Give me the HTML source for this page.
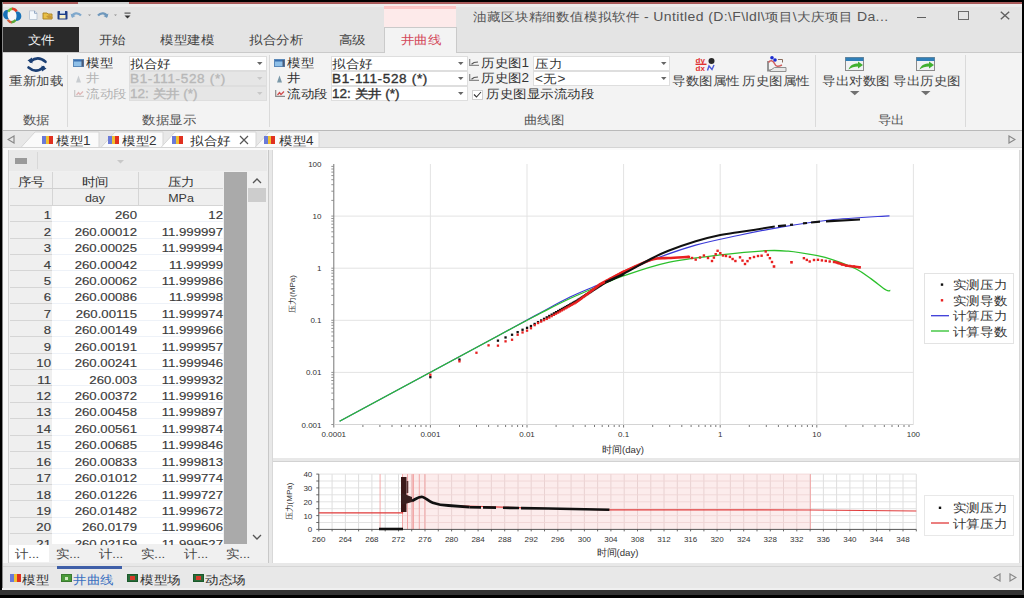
<!DOCTYPE html><html><head><meta charset='utf-8'><style>
*{box-sizing:border-box}
html,body{margin:0;padding:0}
body{width:1024px;height:598px;overflow:hidden;position:relative;background:#000;font-family:"Liberation Sans",sans-serif;color:#222;font-size:12px}
.a{position:absolute}
.t{position:absolute;white-space:nowrap;line-height:1}
</style></head><body><div style='position:absolute;left:0;top:0;width:1024px;height:598px;overflow:hidden'><div class="a" style="left:2px;top:2px;width:1020px;height:587px;background:#e4e4e4"></div>
<div class="a" style="left:2px;top:2px;width:1020px;height:1.5px;background:#a85a5a"></div>
<div class="a" style="left:77.5px;top:1.5px;width:51px;height:2px;background:#cfcfcf"></div>
<div class="a" style="left:2px;top:3.5px;width:1020px;height:3px;background:#ececec"></div>
<div class="a" style="left:384px;top:5px;width:72px;height:22px;background:#fdeaea"></div>
<div class="a" style="left:384px;top:5.5px;width:72px;height:3px;background:#fcc6c6"></div>
<div class="t" style="left:473px;top:2.8000000000000007px;height:28px;line-height:28px;font-size:12.44px;transform:scaleX(1.125);transform-origin:0 50%;color:#555;letter-spacing:0.35px">油藏区块精细数值模拟软件 - Untitled (D:\F\ldl\项目\大庆项目 Da...</div>
<div class="a" style="left:917px;top:16.8px;width:8.5px;height:1.6px;background:#606060"></div>
<div class="a" style="left:958px;top:11px;width:10.5px;height:8.5px;border:1.5px solid #6a6a6a"></div>
<svg class="a" style="left:1000px;top:10.5px" width="10" height="9"><path d="M0.8 0.8L9.2 8.2M9.2 0.8L0.8 8.2" stroke="#606060" stroke-width="1.4"/></svg>
<svg class="a" style="left:0px;top:0px" width="26" height="28" viewBox="0 0 26 28">
<ellipse cx="12.2" cy="15.4" rx="4.5" ry="5.5" fill="#f6f8fa"/>
<path d="M9 9.8 C4.2 9.4 2.6 12.8 3.2 15.8 C3.8 18.8 6.4 19.9 9 19.3 C7.2 17 6.9 12.6 9 9.8Z" fill="#1672b8"/>
<path d="M15 11.3 C19.8 10.8 21.7 13.8 21.3 16.9 C20.9 19.6 18.2 21.2 15 20.9 C17 18.6 17.1 13.8 15 11.3Z" fill="#1672b8"/>
<path d="M8.3 11.8 C9.5 9.6 11 8.8 12.5 8.8" stroke="#6cc040" stroke-width="2.4" fill="none"/>
<path d="M12 8.8 C14 8.8 15.6 9.8 16.6 11.4" stroke="#e0402a" stroke-width="2.6" fill="none"/>
<path d="M7.8 19.8 C9 21.6 10.5 22.2 12 22.2" stroke="#d85a3a" stroke-width="2.4" fill="none"/>
<path d="M11.5 22.2 C13.2 22.1 14.6 21.3 15.6 20" stroke="#58a838" stroke-width="2.4" fill="none"/>
</svg>
<svg class="a" style="left:28px;top:10px" width="104" height="11" viewBox="0 0 104 11">
<path d="M1.5 0.8H6.5L9 3.3V9.5H1.5Z" fill="#f4f8fc" stroke="#b8c4d4" stroke-width="0.9"/>
<path d="M6.5 0.8V3.3H9" fill="none" stroke="#8aa0c0" stroke-width="0.9"/>
<path d="M15 3H19L20 4H24V9H15Z" fill="#e8c048" stroke="#a88020" stroke-width="0.9"/>
<path d="M18 6L22 5L25 8L21 9Z" fill="#c89838"/>
<rect x="29.5" y="1" width="10" height="8.5" rx="0.8" fill="#1f3f88"/>
<rect x="31.5" y="5" width="6" height="3.5" fill="#f8f0c8"/>
<rect x="32" y="1" width="5" height="2.6" fill="#d8e4f4"/>
<path d="M44 6.5 C45 3 50 2 53 5.5" stroke="#7fa8cc" stroke-width="2.2" fill="none"/>
<path d="M42.5 3.5 L44 8 L47.5 6Z" fill="#7fa8cc"/>
<path d="M60 4.5 H63 L61.5 6Z" fill="#909090"/>
<path d="M79 6.5 C78 3 73 2 70 5.5" stroke="#6f98bc" stroke-width="2.2" fill="none"/>
<path d="M80.5 3.5 L79 8 L75.5 6Z" fill="#6f98bc"/>
<path d="M86 4.5 H89 L87.5 6Z" fill="#909090"/>
<rect x="96.5" y="2.5" width="6" height="1.2" fill="#555"/>
<path d="M96.5 5.5 H102.5 L99.5 8.5Z" fill="#333"/>
</svg>
<div class="a" style="left:2px;top:27px;width:77px;height:25px;background:#2b2b2b"></div>
<div class="t" style="left:-59.0px;top:26.799999999999997px;width:200px;height:27.0px;line-height:27.0px;text-align:center;font-size:12.00px;transform:scaleX(1.125);transform-origin:50% 50%;color:#f0f0f0">文件</div>
<div class="t" style="left:12.0px;top:26.799999999999997px;width:200px;height:27.0px;line-height:27.0px;text-align:center;font-size:12.00px;transform:scaleX(1.125);transform-origin:50% 50%;color:#444">开始</div>
<div class="t" style="left:87.0px;top:26.799999999999997px;width:200px;height:27.0px;line-height:27.0px;text-align:center;font-size:12.00px;transform:scaleX(1.125);transform-origin:50% 50%;color:#444">模型建模</div>
<div class="t" style="left:176.0px;top:26.799999999999997px;width:200px;height:27.0px;line-height:27.0px;text-align:center;font-size:12.00px;transform:scaleX(1.125);transform-origin:50% 50%;color:#444">拟合分析</div>
<div class="t" style="left:252.0px;top:26.799999999999997px;width:200px;height:27.0px;line-height:27.0px;text-align:center;font-size:12.00px;transform:scaleX(1.125);transform-origin:50% 50%;color:#444">高级</div>
<div class="a" style="left:384px;top:27px;width:73px;height:26px;background:#f3f3f3;border:1px solid #cacaca;border-bottom:none"></div>
<div class="t" style="left:320.5px;top:27.299999999999997px;width:200px;height:27.0px;line-height:27.0px;text-align:center;font-size:12.00px;transform:scaleX(1.125);transform-origin:50% 50%;color:#d4485a">井曲线</div>
<div class="a" style="left:2px;top:52px;width:1020px;height:79px;background:#f3f3f3;border-top:1px solid #cacaca;border-bottom:1px solid #b9b9b9"></div>
<div class="a" style="left:385px;top:52px;width:71px;height:1.2px;background:#f3f3f3"></div>
<div class="a" style="left:67px;top:55px;width:1px;height:72px;background:#dadada"></div>
<div class="a" style="left:269px;top:55px;width:1px;height:72px;background:#dadada"></div>
<div class="a" style="left:815px;top:55px;width:1px;height:72px;background:#dadada"></div>
<div class="a" style="left:965px;top:55px;width:1px;height:72px;background:#dadada"></div>
<svg class="a" style="left:20px;top:52px" width="34" height="24" viewBox="0 0 34 24">
<path d="M10.5 9.5 Q18 3.2 25.5 9.8" stroke="#1b3f74" stroke-width="2.6" fill="none" stroke-linecap="round"/>
<path d="M7.5 8.5 L12 5.5 L12.5 11.5Z" fill="#1b3f74"/>
<path d="M8.5 15.5 Q16 21.8 23.5 15.2" stroke="#1b3f74" stroke-width="2.6" fill="none" stroke-linecap="round"/>
<path d="M26.5 16.5 L22 19.5 L21.5 13.5Z" fill="#1b3f74"/>
</svg>
<div class="t" style="left:-64.0px;top:68.3px;width:200px;height:27.0px;line-height:27.0px;text-align:center;font-size:12.00px;transform:scaleX(1.125);transform-origin:50% 50%;color:#444">重新加载</div>
<div class="t" style="left:-64.0px;top:107.3px;width:200px;height:27.0px;line-height:27.0px;text-align:center;font-size:12.00px;transform:scaleX(1.125);transform-origin:50% 50%;color:#555">数据</div>
<svg class="a" style="left:73px;top:58.5px" width="11" height="8" viewBox="0 0 11 8"><rect x="0.5" y="0.5" width="10" height="7" fill="#8fc0e8" stroke="#5a88b8" stroke-width="1"/><rect x="1" y="1" width="9" height="1.5" fill="#3a70b0"/><rect x="8.5" y="1" width="2" height="6.5" fill="#4a5a78"/></svg>
<div class="t" style="left:85.5px;top:49.8px;height:27.0px;line-height:27.0px;font-size:12.00px;transform:scaleX(1.125);transform-origin:0 50%;color:#333">模型</div>
<svg class="a" style="left:75px;top:74.5px" width="7" height="8" viewBox="0 0 7 8"><path d="M3.5 0.5 L6 7.5 H1Z" fill="#c8ccd0"/></svg>
<div class="t" style="left:85.5px;top:65.3px;height:27.0px;line-height:27.0px;font-size:12.00px;transform:scaleX(1.125);transform-origin:0 50%;color:#b4b4b4">井</div>
<svg class="a" style="left:73.5px;top:89.5px" width="10" height="7" viewBox="0 0 10 7"><path d="M0.7 0 V6.3 H10" stroke="#c8c8c8" stroke-width="1.2" fill="none"/><path d="M2.5 5 L4.5 2.5 L6 4.5 L9 1.5" stroke="#e0b8b8" stroke-width="1.3" fill="none"/></svg>
<div class="t" style="left:85.5px;top:80.8px;height:27.0px;line-height:27.0px;font-size:12.00px;transform:scaleX(1.125);transform-origin:0 50%;color:#b4b4b4">流动段</div>
<div class="a" style="left:128.5px;top:55.5px;width:138px;height:15px;background:#fff;border:1px solid #dedede"></div>
<div class="t" style="left:130.0px;top:51.3px;height:27.0px;line-height:27.0px;font-size:12.00px;transform:scaleX(1.125);transform-origin:0 50%;color:#333;letter-spacing:0px;">拟合好</div>
<svg class="a" style="left:257.0px;top:62.0px" width="6" height="4"><path d="M0 0H5.5L2.75 3Z" fill="#666"/></svg>
<div class="a" style="left:128.5px;top:70.5px;width:138px;height:15px;background:#e6e6e6;border:1px solid #dedede"></div>
<div class="t" style="left:130.0px;top:65.5px;height:27.0px;line-height:27.0px;font-size:12.00px;transform:scaleX(1.125);transform-origin:0 50%;color:#b8b8b8;letter-spacing:0.6px;-webkit-text-stroke:0.35px #b8b8b8">B1-111-528 (*)</div>
<svg class="a" style="left:257.0px;top:77.0px" width="6" height="4"><path d="M0 0H5.5L2.75 3Z" fill="#c8c8c8"/></svg>
<div class="a" style="left:128.5px;top:85.5px;width:138px;height:15px;background:#e6e6e6;border:1px solid #dedede"></div>
<div class="t" style="left:130.0px;top:80.5px;height:27.0px;line-height:27.0px;font-size:12.00px;transform:scaleX(1.125);transform-origin:0 50%;color:#b8b8b8;letter-spacing:0px;-webkit-text-stroke:0.35px #b8b8b8">12: 关井 (*)</div>
<svg class="a" style="left:257.0px;top:92.0px" width="6" height="4"><path d="M0 0H5.5L2.75 3Z" fill="#c8c8c8"/></svg>
<div class="t" style="left:69.0px;top:107.3px;width:200px;height:27.0px;line-height:27.0px;text-align:center;font-size:12.00px;transform:scaleX(1.125);transform-origin:50% 50%;color:#555">数据显示</div>
<svg class="a" style="left:274px;top:58.5px" width="11" height="8" viewBox="0 0 11 8"><rect x="0.5" y="0.5" width="10" height="7" fill="#8fc0e8" stroke="#5a88b8" stroke-width="1"/><rect x="1" y="1" width="9" height="1.5" fill="#3a70b0"/><rect x="8.5" y="1" width="2" height="6.5" fill="#4a5a78"/></svg>
<div class="t" style="left:286.5px;top:49.8px;height:27.0px;line-height:27.0px;font-size:12.00px;transform:scaleX(1.125);transform-origin:0 50%;color:#333">模型</div>
<svg class="a" style="left:276px;top:74.5px" width="7" height="8" viewBox="0 0 7 8"><path d="M3.5 0.5 L6 7.5 H1Z" fill="#7a98a8"/></svg>
<div class="t" style="left:286.5px;top:65.3px;height:27.0px;line-height:27.0px;font-size:12.00px;transform:scaleX(1.125);transform-origin:0 50%;color:#333">井</div>
<svg class="a" style="left:274.5px;top:89.5px" width="10" height="7" viewBox="0 0 10 7"><path d="M0.7 0 V6.3 H10" stroke="#8a8a8a" stroke-width="1.2" fill="none"/><path d="M2.5 5 L4.5 2.5 L6 4.5 L9 1.5" stroke="#d05050" stroke-width="1.3" fill="none"/></svg>
<div class="t" style="left:286.5px;top:80.8px;height:27.0px;line-height:27.0px;font-size:12.00px;transform:scaleX(1.125);transform-origin:0 50%;color:#333">流动段</div>
<div class="a" style="left:330.5px;top:55.5px;width:137px;height:15px;background:#fff;border:1px solid #dedede"></div>
<div class="t" style="left:332.0px;top:51.3px;height:27.0px;line-height:27.0px;font-size:12.00px;transform:scaleX(1.125);transform-origin:0 50%;color:#333;letter-spacing:0px;">拟合好</div>
<svg class="a" style="left:458.0px;top:62.0px" width="6" height="4"><path d="M0 0H5.5L2.75 3Z" fill="#666"/></svg>
<div class="a" style="left:330.5px;top:70.5px;width:137px;height:15px;background:#fff;border:1px solid #dedede"></div>
<div class="t" style="left:332.0px;top:65.5px;height:27.0px;line-height:27.0px;font-size:12.00px;transform:scaleX(1.125);transform-origin:0 50%;color:#333;letter-spacing:0.6px;-webkit-text-stroke:0.35px #333">B1-111-528 (*)</div>
<svg class="a" style="left:458.0px;top:77.0px" width="6" height="4"><path d="M0 0H5.5L2.75 3Z" fill="#666"/></svg>
<div class="a" style="left:330.5px;top:85.5px;width:137px;height:15px;background:#fff;border:1px solid #dedede"></div>
<div class="t" style="left:332.0px;top:80.5px;height:27.0px;line-height:27.0px;font-size:12.00px;transform:scaleX(1.125);transform-origin:0 50%;color:#333;letter-spacing:0px;-webkit-text-stroke:0.35px #333">12: 关井 (*)</div>
<svg class="a" style="left:458.0px;top:92.0px" width="6" height="4"><path d="M0 0H5.5L2.75 3Z" fill="#666"/></svg>
<svg class="a" style="left:469px;top:58.5px" width="10" height="7" viewBox="0 0 10 7"><path d="M0.7 0 V6.3 H10" stroke="#8a8a8a" stroke-width="1.2" fill="none"/><path d="M2.5 5.2 L5 3.5 L9 3" stroke="#555" stroke-width="1.2" fill="none"/></svg>
<div class="t" style="left:481px;top:49.8px;height:27.0px;line-height:27.0px;font-size:12.00px;transform:scaleX(1.125);transform-origin:0 50%;color:#333">历史图1</div>
<svg class="a" style="left:469px;top:74px" width="10" height="7" viewBox="0 0 10 7"><path d="M0.7 0 V6.3 H10" stroke="#8a8a8a" stroke-width="1.2" fill="none"/><path d="M2.5 5.2 L5 3.5 L9 3" stroke="#555" stroke-width="1.2" fill="none"/></svg>
<div class="t" style="left:481px;top:65.3px;height:27.0px;line-height:27.0px;font-size:12.00px;transform:scaleX(1.125);transform-origin:0 50%;color:#333">历史图2</div>
<div class="a" style="left:533px;top:55.5px;width:137px;height:15px;background:#fff;border:1px solid #dedede"></div>
<div class="t" style="left:534.5px;top:51.3px;height:27.0px;line-height:27.0px;font-size:12.00px;transform:scaleX(1.125);transform-origin:0 50%;color:#333;letter-spacing:0px;">压力</div>
<svg class="a" style="left:660.5px;top:62.0px" width="6" height="4"><path d="M0 0H5.5L2.75 3Z" fill="#666"/></svg>
<div class="a" style="left:533px;top:70.5px;width:137px;height:15px;background:#fff;border:1px solid #dedede"></div>
<div class="t" style="left:534.5px;top:66.3px;height:27.0px;line-height:27.0px;font-size:12.00px;transform:scaleX(1.125);transform-origin:0 50%;color:#333;letter-spacing:0.5px;">&lt;无&gt;</div>
<svg class="a" style="left:660.5px;top:77.0px" width="6" height="4"><path d="M0 0H5.5L2.75 3Z" fill="#666"/></svg>
<div class="a" style="left:471.5px;top:89.5px;width:11px;height:10px;background:#fff;border:1px solid #cfcfcf"></div>
<svg class="a" style="left:473px;top:91px" width="9" height="7"><path d="M1 3.5L3.5 6L8 1" stroke="#333" stroke-width="1.1" fill="none"/></svg>
<div class="t" style="left:486px;top:81.3px;height:27.0px;line-height:27.0px;font-size:12.00px;transform:scaleX(1.125);transform-origin:0 50%;color:#333">历史图显示流动段</div>
<div class="t" style="left:443.5px;top:107.3px;width:200px;height:27.0px;line-height:27.0px;text-align:center;font-size:12.00px;transform:scaleX(1.125);transform-origin:50% 50%;color:#555">曲线图</div>
<div class="t" style="left:606.0px;top:68.3px;width:200px;height:27.0px;line-height:27.0px;text-align:center;font-size:12.00px;transform:scaleX(1.125);transform-origin:50% 50%;color:#444">导数图属性</div>
<div class="t" style="left:676.0px;top:68.3px;width:200px;height:27.0px;line-height:27.0px;text-align:center;font-size:12.00px;transform:scaleX(1.125);transform-origin:50% 50%;color:#444">历史图属性</div>
<svg class="a" style="left:695px;top:56px" width="22" height="16" viewBox="0 0 22 16">
<text x="0.5" y="6.8" font-size="8" fill="#e03030" font-family="Liberation Sans" font-weight="bold">dy</text>
<rect x="0.5" y="7.6" width="11" height="1.4" fill="#e03030"/>
<text x="0.5" y="15.3" font-size="8" fill="#e03030" font-family="Liberation Sans" font-weight="bold">dx</text>
<circle cx="16.5" cy="5" r="3" fill="#2a2a2a"/>
<path d="M12.5 14.5 L14 10 L17 13.5 L19 9" stroke="#4a5ad8" stroke-width="1.4" fill="none"/>
</svg>
<svg class="a" style="left:766px;top:56px" width="22" height="17" viewBox="0 0 22 17">
<path d="M2 5 V14.5 H17" stroke="#8a8a8a" stroke-width="1.8" fill="none"/>
<path d="M2.5 6.5 C4 4 7 4 8.5 7.5 C10 11 12 11 16 9" stroke="#d06060" stroke-width="1.5" fill="none"/>
<path d="M4 14.5 L8.5 11.5 H20 V15.5 H4Z" fill="#e8e8e8" stroke="#909090" stroke-width="1"/>
<circle cx="6" cy="1.8" r="1.8" fill="#1a2ad0"/>
<circle cx="9" cy="4" r="1.8" fill="#1a2ad0"/>
<path d="M12 3.5 H16.5 V6.5" stroke="#8a6a5a" stroke-width="1" fill="none"/>
</svg>
<svg class="a" style="left:845px;top:57px" width="19" height="14" viewBox="0 0 19 14">
<rect x="0.5" y="0.5" width="18" height="13" fill="#f0f2f4" stroke="#8a8a8a"/>
<rect x="0.5" y="0.5" width="18" height="3.5" fill="#2f7fb8"/>
<path d="M3.5 12.5 C5 8 9 6.5 13 6.5 L13 4.5 L18 8 L13 11.5 L13 9.5 C9.5 9.5 6 10.5 3.5 12.5Z" fill="#40b030"/>
</svg>
<div class="t" style="left:755.5px;top:68.3px;width:200px;height:27.0px;line-height:27.0px;text-align:center;font-size:12.00px;transform:scaleX(1.125);transform-origin:50% 50%;color:#444">导出对数图</div>
<svg class="a" style="left:849.5px;top:91px" width="10" height="5"><path d="M0 0H9.5L4.75 4.2Z" fill="#707070"/></svg>
<svg class="a" style="left:916px;top:57px" width="19" height="14" viewBox="0 0 19 14">
<rect x="0.5" y="0.5" width="18" height="13" fill="#f0f2f4" stroke="#8a8a8a"/>
<rect x="0.5" y="0.5" width="18" height="3.5" fill="#2f7fb8"/>
<path d="M3.5 12.5 C5 8 9 6.5 13 6.5 L13 4.5 L18 8 L13 11.5 L13 9.5 C9.5 9.5 6 10.5 3.5 12.5Z" fill="#40b030"/>
</svg>
<div class="t" style="left:826.5px;top:68.3px;width:200px;height:27.0px;line-height:27.0px;text-align:center;font-size:12.00px;transform:scaleX(1.125);transform-origin:50% 50%;color:#444">导出历史图</div>
<svg class="a" style="left:920.5px;top:91px" width="10" height="5"><path d="M0 0H9.5L4.75 4.2Z" fill="#707070"/></svg>
<div class="t" style="left:790.5px;top:107.3px;width:200px;height:27.0px;line-height:27.0px;text-align:center;font-size:12.00px;transform:scaleX(1.125);transform-origin:50% 50%;color:#555">导出</div>
<div class="a" style="left:2px;top:131px;width:1020px;height:17px;background:#e8e8e8"></div>
<svg class="a" style="left:7px;top:135px" width="8" height="9"><path d="M7 1L1 4.5L7 8Z" stroke="#888" fill="none" stroke-width="1.2"/></svg>
<svg class="a" style="left:1008px;top:135px" width="8" height="9"><path d="M1 1L7 4.5L1 8Z" stroke="#888" fill="none" stroke-width="1.2"/></svg>
<svg class="a" style="left:20px;top:131px" width="80" height="18"><path d="M0 17.5 L15 1 H79 V17.5Z" fill="#fafafa" stroke="#d6d6d6" stroke-width="1"/></svg>
<svg class="a" style="left:100px;top:131px" width="64" height="18"><path d="M0 17.5 L15 1 H63 V17.5Z" fill="#fafafa" stroke="#d6d6d6" stroke-width="1"/></svg>
<svg class="a" style="left:160px;top:131px" width="97" height="18"><path d="M0 17.5 L15 1 H96 V17.5Z" fill="#ffffff" stroke="#d6d6d6" stroke-width="1"/></svg>
<svg class="a" style="left:254px;top:131px" width="66" height="18"><path d="M0 17.5 L15 1 H65 V17.5Z" fill="#fafafa" stroke="#d6d6d6" stroke-width="1"/></svg>
<div class="a" style="left:42px;top:136px;width:11px;height:8px;background:linear-gradient(90deg,#6a7ad8 0 33%,#f0c030 33% 66%,#e03020 66%)"></div>
<div class="t" style="left:56px;top:128.3px;height:27.0px;line-height:27.0px;font-size:12.00px;transform:scaleX(1.125);transform-origin:0 50%;color:#333">模型1</div>
<div class="a" style="left:108px;top:136px;width:11px;height:8px;background:linear-gradient(90deg,#6a7ad8 0 33%,#f0c030 33% 66%,#e03020 66%)"></div>
<div class="t" style="left:122px;top:128.3px;height:27.0px;line-height:27.0px;font-size:12.00px;transform:scaleX(1.125);transform-origin:0 50%;color:#333">模型2</div>
<div class="a" style="left:172px;top:136px;width:11px;height:8px;background:linear-gradient(90deg,#6a7ad8 0 33%,#f0c030 33% 66%,#e03020 66%)"></div>
<div class="t" style="left:190px;top:128.3px;height:27.0px;line-height:27.0px;font-size:12.00px;transform:scaleX(1.125);transform-origin:0 50%;color:#333">拟合好</div>
<svg class="a" style="left:239px;top:135px" width="10" height="10"><path d="M1 1L9 9M9 1L1 9" stroke="#555" stroke-width="1.2"/></svg>
<div class="a" style="left:264px;top:136px;width:11px;height:8px;background:linear-gradient(90deg,#6a7ad8 0 33%,#f0c030 33% 66%,#e03020 66%)"></div>
<div class="t" style="left:279px;top:128.3px;height:27.0px;line-height:27.0px;font-size:12.00px;transform:scaleX(1.125);transform-origin:0 50%;color:#333">模型4</div>
<div class="a" style="left:2px;top:148px;width:1020px;height:441px;background:#e8e8e8"></div>
<div class="a" style="left:3px;top:148px;width:5px;height:415px;background:#f8f8f8"></div>
<div class="a" style="left:2px;top:147px;width:1020px;height:1px;background:#d4d4d4"></div>
<div class="a" style="left:2px;top:148px;width:1020px;height:2px;background:#fafafa"></div>
<div class="a" style="left:8px;top:150px;width:260px;height:413px;background:#f0f0f0;border-left:1px solid #d0d0d0"></div>
<div class="a" style="left:9px;top:150px;width:258px;height:21px;background:#e9e9e9"></div>
<div class="a" style="left:15px;top:157.5px;width:12px;height:6.5px;background:#9a9a9a"></div>
<div class="a" style="left:37px;top:152px;width:1px;height:17px;background:#d8d8d8"></div>
<svg class="a" style="left:117px;top:160px" width="7" height="4"><path d="M0 0H7L3.5 3.5Z" fill="#c8c8c8"/></svg>
<div class="a" style="left:10px;top:172px;width:213px;height:372px;background:#fff;overflow:hidden">
</div>
<div class="a" style="left:224px;top:172px;width:23px;height:372px;background:#aaaaaa"></div>
<div class="a" style="left:10px;top:172px;width:213px;height:33px;background:#efefef"></div>
<div class="a" style="left:51.5px;top:172px;width:1px;height:33px;background:#d5d5d5"></div>
<div class="a" style="left:137.5px;top:172px;width:1px;height:33px;background:#d5d5d5"></div>
<div class="a" style="left:10px;top:188px;width:213px;height:1px;background:#d0d0d0"></div>
<div class="a" style="left:10px;top:205px;width:213px;height:0.8px;background:#d5d5d5"></div>
<div class="t" style="left:-69.5px;top:168.8px;width:200px;height:27.0px;line-height:27.0px;text-align:center;font-size:12.00px;transform:scaleX(1.125);transform-origin:50% 50%;color:#333;font-weight:500">序号</div>
<div class="t" style="left:-5.5px;top:168.8px;width:200px;height:27.0px;line-height:27.0px;text-align:center;font-size:12.00px;transform:scaleX(1.125);transform-origin:50% 50%;color:#333;font-weight:500">时间</div>
<div class="t" style="left:80.5px;top:168.8px;width:200px;height:27.0px;line-height:27.0px;text-align:center;font-size:12.00px;transform:scaleX(1.125);transform-origin:50% 50%;color:#333;font-weight:500">压力</div>
<div class="t" style="left:-5.5px;top:186.3px;width:200px;height:25.0px;line-height:25.0px;text-align:center;font-size:11.11px;transform:scaleX(1.125);transform-origin:50% 50%;color:#3a3a3a">day</div>
<div class="t" style="left:80.5px;top:186.3px;width:200px;height:25.0px;line-height:25.0px;text-align:center;font-size:11.11px;transform:scaleX(1.125);transform-origin:50% 50%;color:#3a3a3a">MPa</div>
<div class="a" style="left:10px;top:205.7px;width:41.5px;height:16.43px;background:#efefef;border-bottom:1px solid #d5d5d5"></div>
<div class="a" style="left:51.5px;top:221.13px;width:171.5px;height:1px;background:#eef2f8"></div>
<div class="t" style="left:-149.5px;top:202.215px;width:200px;height:26.4px;line-height:26.4px;text-align:right;font-size:11.73px;transform:scaleX(1.125);transform-origin:100% 50%;color:#3a3a3a;-webkit-text-stroke:0.15px #3a3a3a">1</div>
<div class="t" style="left:-63.5px;top:202.215px;width:200px;height:26.4px;line-height:26.4px;text-align:right;font-size:11.73px;transform:scaleX(1.125);transform-origin:100% 50%;color:#3a3a3a;-webkit-text-stroke:0.15px #3a3a3a">260</div>
<div class="t" style="left:22.5px;top:202.215px;width:200px;height:26.4px;line-height:26.4px;text-align:right;font-size:11.73px;transform:scaleX(1.125);transform-origin:100% 50%;color:#3a3a3a;-webkit-text-stroke:0.15px #3a3a3a">12</div>
<div class="a" style="left:10px;top:222.13px;width:41.5px;height:16.43px;background:#efefef;border-bottom:1px solid #d5d5d5"></div>
<div class="a" style="left:51.5px;top:237.56px;width:171.5px;height:1px;background:#eef2f8"></div>
<div class="t" style="left:-149.5px;top:218.645px;width:200px;height:26.4px;line-height:26.4px;text-align:right;font-size:11.73px;transform:scaleX(1.125);transform-origin:100% 50%;color:#3a3a3a;-webkit-text-stroke:0.15px #3a3a3a">2</div>
<div class="t" style="left:-63.5px;top:218.645px;width:200px;height:26.4px;line-height:26.4px;text-align:right;font-size:11.73px;transform:scaleX(1.125);transform-origin:100% 50%;color:#3a3a3a;-webkit-text-stroke:0.15px #3a3a3a">260.00012</div>
<div class="t" style="left:22.5px;top:218.645px;width:200px;height:26.4px;line-height:26.4px;text-align:right;font-size:11.73px;transform:scaleX(1.125);transform-origin:100% 50%;color:#3a3a3a;-webkit-text-stroke:0.15px #3a3a3a">11.999997</div>
<div class="a" style="left:10px;top:238.56px;width:41.5px;height:16.43px;background:#efefef;border-bottom:1px solid #d5d5d5"></div>
<div class="a" style="left:51.5px;top:253.99px;width:171.5px;height:1px;background:#eef2f8"></div>
<div class="t" style="left:-149.5px;top:235.07500000000002px;width:200px;height:26.4px;line-height:26.4px;text-align:right;font-size:11.73px;transform:scaleX(1.125);transform-origin:100% 50%;color:#3a3a3a;-webkit-text-stroke:0.15px #3a3a3a">3</div>
<div class="t" style="left:-63.5px;top:235.07500000000002px;width:200px;height:26.4px;line-height:26.4px;text-align:right;font-size:11.73px;transform:scaleX(1.125);transform-origin:100% 50%;color:#3a3a3a;-webkit-text-stroke:0.15px #3a3a3a">260.00025</div>
<div class="t" style="left:22.5px;top:235.07500000000002px;width:200px;height:26.4px;line-height:26.4px;text-align:right;font-size:11.73px;transform:scaleX(1.125);transform-origin:100% 50%;color:#3a3a3a;-webkit-text-stroke:0.15px #3a3a3a">11.999994</div>
<div class="a" style="left:10px;top:254.98999999999998px;width:41.5px;height:16.43px;background:#efefef;border-bottom:1px solid #d5d5d5"></div>
<div class="a" style="left:51.5px;top:270.41999999999996px;width:171.5px;height:1px;background:#eef2f8"></div>
<div class="t" style="left:-149.5px;top:251.505px;width:200px;height:26.4px;line-height:26.4px;text-align:right;font-size:11.73px;transform:scaleX(1.125);transform-origin:100% 50%;color:#3a3a3a;-webkit-text-stroke:0.15px #3a3a3a">4</div>
<div class="t" style="left:-63.5px;top:251.505px;width:200px;height:26.4px;line-height:26.4px;text-align:right;font-size:11.73px;transform:scaleX(1.125);transform-origin:100% 50%;color:#3a3a3a;-webkit-text-stroke:0.15px #3a3a3a">260.00042</div>
<div class="t" style="left:22.5px;top:251.505px;width:200px;height:26.4px;line-height:26.4px;text-align:right;font-size:11.73px;transform:scaleX(1.125);transform-origin:100% 50%;color:#3a3a3a;-webkit-text-stroke:0.15px #3a3a3a">11.99999</div>
<div class="a" style="left:10px;top:271.41999999999996px;width:41.5px;height:16.43px;background:#efefef;border-bottom:1px solid #d5d5d5"></div>
<div class="a" style="left:51.5px;top:286.84999999999997px;width:171.5px;height:1px;background:#eef2f8"></div>
<div class="t" style="left:-149.5px;top:267.93499999999995px;width:200px;height:26.4px;line-height:26.4px;text-align:right;font-size:11.73px;transform:scaleX(1.125);transform-origin:100% 50%;color:#3a3a3a;-webkit-text-stroke:0.15px #3a3a3a">5</div>
<div class="t" style="left:-63.5px;top:267.93499999999995px;width:200px;height:26.4px;line-height:26.4px;text-align:right;font-size:11.73px;transform:scaleX(1.125);transform-origin:100% 50%;color:#3a3a3a;-webkit-text-stroke:0.15px #3a3a3a">260.00062</div>
<div class="t" style="left:22.5px;top:267.93499999999995px;width:200px;height:26.4px;line-height:26.4px;text-align:right;font-size:11.73px;transform:scaleX(1.125);transform-origin:100% 50%;color:#3a3a3a;-webkit-text-stroke:0.15px #3a3a3a">11.999986</div>
<div class="a" style="left:10px;top:287.85px;width:41.5px;height:16.43px;background:#efefef;border-bottom:1px solid #d5d5d5"></div>
<div class="a" style="left:51.5px;top:303.28000000000003px;width:171.5px;height:1px;background:#eef2f8"></div>
<div class="t" style="left:-149.5px;top:284.365px;width:200px;height:26.4px;line-height:26.4px;text-align:right;font-size:11.73px;transform:scaleX(1.125);transform-origin:100% 50%;color:#3a3a3a;-webkit-text-stroke:0.15px #3a3a3a">6</div>
<div class="t" style="left:-63.5px;top:284.365px;width:200px;height:26.4px;line-height:26.4px;text-align:right;font-size:11.73px;transform:scaleX(1.125);transform-origin:100% 50%;color:#3a3a3a;-webkit-text-stroke:0.15px #3a3a3a">260.00086</div>
<div class="t" style="left:22.5px;top:284.365px;width:200px;height:26.4px;line-height:26.4px;text-align:right;font-size:11.73px;transform:scaleX(1.125);transform-origin:100% 50%;color:#3a3a3a;-webkit-text-stroke:0.15px #3a3a3a">11.99998</div>
<div class="a" style="left:10px;top:304.28px;width:41.5px;height:16.43px;background:#efefef;border-bottom:1px solid #d5d5d5"></div>
<div class="a" style="left:51.5px;top:319.71px;width:171.5px;height:1px;background:#eef2f8"></div>
<div class="t" style="left:-149.5px;top:300.79499999999996px;width:200px;height:26.4px;line-height:26.4px;text-align:right;font-size:11.73px;transform:scaleX(1.125);transform-origin:100% 50%;color:#3a3a3a;-webkit-text-stroke:0.15px #3a3a3a">7</div>
<div class="t" style="left:-63.5px;top:300.79499999999996px;width:200px;height:26.4px;line-height:26.4px;text-align:right;font-size:11.73px;transform:scaleX(1.125);transform-origin:100% 50%;color:#3a3a3a;-webkit-text-stroke:0.15px #3a3a3a">260.00115</div>
<div class="t" style="left:22.5px;top:300.79499999999996px;width:200px;height:26.4px;line-height:26.4px;text-align:right;font-size:11.73px;transform:scaleX(1.125);transform-origin:100% 50%;color:#3a3a3a;-webkit-text-stroke:0.15px #3a3a3a">11.999974</div>
<div class="a" style="left:10px;top:320.71px;width:41.5px;height:16.43px;background:#efefef;border-bottom:1px solid #d5d5d5"></div>
<div class="a" style="left:51.5px;top:336.14px;width:171.5px;height:1px;background:#eef2f8"></div>
<div class="t" style="left:-149.5px;top:317.22499999999997px;width:200px;height:26.4px;line-height:26.4px;text-align:right;font-size:11.73px;transform:scaleX(1.125);transform-origin:100% 50%;color:#3a3a3a;-webkit-text-stroke:0.15px #3a3a3a">8</div>
<div class="t" style="left:-63.5px;top:317.22499999999997px;width:200px;height:26.4px;line-height:26.4px;text-align:right;font-size:11.73px;transform:scaleX(1.125);transform-origin:100% 50%;color:#3a3a3a;-webkit-text-stroke:0.15px #3a3a3a">260.00149</div>
<div class="t" style="left:22.5px;top:317.22499999999997px;width:200px;height:26.4px;line-height:26.4px;text-align:right;font-size:11.73px;transform:scaleX(1.125);transform-origin:100% 50%;color:#3a3a3a;-webkit-text-stroke:0.15px #3a3a3a">11.999966</div>
<div class="a" style="left:10px;top:337.14px;width:41.5px;height:16.43px;background:#efefef;border-bottom:1px solid #d5d5d5"></div>
<div class="a" style="left:51.5px;top:352.57px;width:171.5px;height:1px;background:#eef2f8"></div>
<div class="t" style="left:-149.5px;top:333.655px;width:200px;height:26.4px;line-height:26.4px;text-align:right;font-size:11.73px;transform:scaleX(1.125);transform-origin:100% 50%;color:#3a3a3a;-webkit-text-stroke:0.15px #3a3a3a">9</div>
<div class="t" style="left:-63.5px;top:333.655px;width:200px;height:26.4px;line-height:26.4px;text-align:right;font-size:11.73px;transform:scaleX(1.125);transform-origin:100% 50%;color:#3a3a3a;-webkit-text-stroke:0.15px #3a3a3a">260.00191</div>
<div class="t" style="left:22.5px;top:333.655px;width:200px;height:26.4px;line-height:26.4px;text-align:right;font-size:11.73px;transform:scaleX(1.125);transform-origin:100% 50%;color:#3a3a3a;-webkit-text-stroke:0.15px #3a3a3a">11.999957</div>
<div class="a" style="left:10px;top:353.57px;width:41.5px;height:16.43px;background:#efefef;border-bottom:1px solid #d5d5d5"></div>
<div class="a" style="left:51.5px;top:369.0px;width:171.5px;height:1px;background:#eef2f8"></div>
<div class="t" style="left:-149.5px;top:350.085px;width:200px;height:26.4px;line-height:26.4px;text-align:right;font-size:11.73px;transform:scaleX(1.125);transform-origin:100% 50%;color:#3a3a3a;-webkit-text-stroke:0.15px #3a3a3a">10</div>
<div class="t" style="left:-63.5px;top:350.085px;width:200px;height:26.4px;line-height:26.4px;text-align:right;font-size:11.73px;transform:scaleX(1.125);transform-origin:100% 50%;color:#3a3a3a;-webkit-text-stroke:0.15px #3a3a3a">260.00241</div>
<div class="t" style="left:22.5px;top:350.085px;width:200px;height:26.4px;line-height:26.4px;text-align:right;font-size:11.73px;transform:scaleX(1.125);transform-origin:100% 50%;color:#3a3a3a;-webkit-text-stroke:0.15px #3a3a3a">11.999946</div>
<div class="a" style="left:10px;top:370.0px;width:41.5px;height:16.43px;background:#efefef;border-bottom:1px solid #d5d5d5"></div>
<div class="a" style="left:51.5px;top:385.43px;width:171.5px;height:1px;background:#eef2f8"></div>
<div class="t" style="left:-149.5px;top:366.515px;width:200px;height:26.4px;line-height:26.4px;text-align:right;font-size:11.73px;transform:scaleX(1.125);transform-origin:100% 50%;color:#3a3a3a;-webkit-text-stroke:0.15px #3a3a3a">11</div>
<div class="t" style="left:-63.5px;top:366.515px;width:200px;height:26.4px;line-height:26.4px;text-align:right;font-size:11.73px;transform:scaleX(1.125);transform-origin:100% 50%;color:#3a3a3a;-webkit-text-stroke:0.15px #3a3a3a">260.003</div>
<div class="t" style="left:22.5px;top:366.515px;width:200px;height:26.4px;line-height:26.4px;text-align:right;font-size:11.73px;transform:scaleX(1.125);transform-origin:100% 50%;color:#3a3a3a;-webkit-text-stroke:0.15px #3a3a3a">11.999932</div>
<div class="a" style="left:10px;top:386.42999999999995px;width:41.5px;height:16.43px;background:#efefef;border-bottom:1px solid #d5d5d5"></div>
<div class="a" style="left:51.5px;top:401.85999999999996px;width:171.5px;height:1px;background:#eef2f8"></div>
<div class="t" style="left:-149.5px;top:382.94499999999994px;width:200px;height:26.4px;line-height:26.4px;text-align:right;font-size:11.73px;transform:scaleX(1.125);transform-origin:100% 50%;color:#3a3a3a;-webkit-text-stroke:0.15px #3a3a3a">12</div>
<div class="t" style="left:-63.5px;top:382.94499999999994px;width:200px;height:26.4px;line-height:26.4px;text-align:right;font-size:11.73px;transform:scaleX(1.125);transform-origin:100% 50%;color:#3a3a3a;-webkit-text-stroke:0.15px #3a3a3a">260.00372</div>
<div class="t" style="left:22.5px;top:382.94499999999994px;width:200px;height:26.4px;line-height:26.4px;text-align:right;font-size:11.73px;transform:scaleX(1.125);transform-origin:100% 50%;color:#3a3a3a;-webkit-text-stroke:0.15px #3a3a3a">11.999916</div>
<div class="a" style="left:10px;top:402.86px;width:41.5px;height:16.43px;background:#efefef;border-bottom:1px solid #d5d5d5"></div>
<div class="a" style="left:51.5px;top:418.29px;width:171.5px;height:1px;background:#eef2f8"></div>
<div class="t" style="left:-149.5px;top:399.375px;width:200px;height:26.4px;line-height:26.4px;text-align:right;font-size:11.73px;transform:scaleX(1.125);transform-origin:100% 50%;color:#3a3a3a;-webkit-text-stroke:0.15px #3a3a3a">13</div>
<div class="t" style="left:-63.5px;top:399.375px;width:200px;height:26.4px;line-height:26.4px;text-align:right;font-size:11.73px;transform:scaleX(1.125);transform-origin:100% 50%;color:#3a3a3a;-webkit-text-stroke:0.15px #3a3a3a">260.00458</div>
<div class="t" style="left:22.5px;top:399.375px;width:200px;height:26.4px;line-height:26.4px;text-align:right;font-size:11.73px;transform:scaleX(1.125);transform-origin:100% 50%;color:#3a3a3a;-webkit-text-stroke:0.15px #3a3a3a">11.999897</div>
<div class="a" style="left:10px;top:419.28999999999996px;width:41.5px;height:16.43px;background:#efefef;border-bottom:1px solid #d5d5d5"></div>
<div class="a" style="left:51.5px;top:434.71999999999997px;width:171.5px;height:1px;background:#eef2f8"></div>
<div class="t" style="left:-149.5px;top:415.80499999999995px;width:200px;height:26.4px;line-height:26.4px;text-align:right;font-size:11.73px;transform:scaleX(1.125);transform-origin:100% 50%;color:#3a3a3a;-webkit-text-stroke:0.15px #3a3a3a">14</div>
<div class="t" style="left:-63.5px;top:415.80499999999995px;width:200px;height:26.4px;line-height:26.4px;text-align:right;font-size:11.73px;transform:scaleX(1.125);transform-origin:100% 50%;color:#3a3a3a;-webkit-text-stroke:0.15px #3a3a3a">260.00561</div>
<div class="t" style="left:22.5px;top:415.80499999999995px;width:200px;height:26.4px;line-height:26.4px;text-align:right;font-size:11.73px;transform:scaleX(1.125);transform-origin:100% 50%;color:#3a3a3a;-webkit-text-stroke:0.15px #3a3a3a">11.999874</div>
<div class="a" style="left:10px;top:435.71999999999997px;width:41.5px;height:16.43px;background:#efefef;border-bottom:1px solid #d5d5d5"></div>
<div class="a" style="left:51.5px;top:451.15px;width:171.5px;height:1px;background:#eef2f8"></div>
<div class="t" style="left:-149.5px;top:432.23499999999996px;width:200px;height:26.4px;line-height:26.4px;text-align:right;font-size:11.73px;transform:scaleX(1.125);transform-origin:100% 50%;color:#3a3a3a;-webkit-text-stroke:0.15px #3a3a3a">15</div>
<div class="t" style="left:-63.5px;top:432.23499999999996px;width:200px;height:26.4px;line-height:26.4px;text-align:right;font-size:11.73px;transform:scaleX(1.125);transform-origin:100% 50%;color:#3a3a3a;-webkit-text-stroke:0.15px #3a3a3a">260.00685</div>
<div class="t" style="left:22.5px;top:432.23499999999996px;width:200px;height:26.4px;line-height:26.4px;text-align:right;font-size:11.73px;transform:scaleX(1.125);transform-origin:100% 50%;color:#3a3a3a;-webkit-text-stroke:0.15px #3a3a3a">11.999846</div>
<div class="a" style="left:10px;top:452.15px;width:41.5px;height:16.43px;background:#efefef;border-bottom:1px solid #d5d5d5"></div>
<div class="a" style="left:51.5px;top:467.58px;width:171.5px;height:1px;background:#eef2f8"></div>
<div class="t" style="left:-149.5px;top:448.66499999999996px;width:200px;height:26.4px;line-height:26.4px;text-align:right;font-size:11.73px;transform:scaleX(1.125);transform-origin:100% 50%;color:#3a3a3a;-webkit-text-stroke:0.15px #3a3a3a">16</div>
<div class="t" style="left:-63.5px;top:448.66499999999996px;width:200px;height:26.4px;line-height:26.4px;text-align:right;font-size:11.73px;transform:scaleX(1.125);transform-origin:100% 50%;color:#3a3a3a;-webkit-text-stroke:0.15px #3a3a3a">260.00833</div>
<div class="t" style="left:22.5px;top:448.66499999999996px;width:200px;height:26.4px;line-height:26.4px;text-align:right;font-size:11.73px;transform:scaleX(1.125);transform-origin:100% 50%;color:#3a3a3a;-webkit-text-stroke:0.15px #3a3a3a">11.999813</div>
<div class="a" style="left:10px;top:468.58px;width:41.5px;height:16.43px;background:#efefef;border-bottom:1px solid #d5d5d5"></div>
<div class="a" style="left:51.5px;top:484.01px;width:171.5px;height:1px;background:#eef2f8"></div>
<div class="t" style="left:-149.5px;top:465.09499999999997px;width:200px;height:26.4px;line-height:26.4px;text-align:right;font-size:11.73px;transform:scaleX(1.125);transform-origin:100% 50%;color:#3a3a3a;-webkit-text-stroke:0.15px #3a3a3a">17</div>
<div class="t" style="left:-63.5px;top:465.09499999999997px;width:200px;height:26.4px;line-height:26.4px;text-align:right;font-size:11.73px;transform:scaleX(1.125);transform-origin:100% 50%;color:#3a3a3a;-webkit-text-stroke:0.15px #3a3a3a">260.01012</div>
<div class="t" style="left:22.5px;top:465.09499999999997px;width:200px;height:26.4px;line-height:26.4px;text-align:right;font-size:11.73px;transform:scaleX(1.125);transform-origin:100% 50%;color:#3a3a3a;-webkit-text-stroke:0.15px #3a3a3a">11.999774</div>
<div class="a" style="left:10px;top:485.01px;width:41.5px;height:16.43px;background:#efefef;border-bottom:1px solid #d5d5d5"></div>
<div class="a" style="left:51.5px;top:500.44px;width:171.5px;height:1px;background:#eef2f8"></div>
<div class="t" style="left:-149.5px;top:481.525px;width:200px;height:26.4px;line-height:26.4px;text-align:right;font-size:11.73px;transform:scaleX(1.125);transform-origin:100% 50%;color:#3a3a3a;-webkit-text-stroke:0.15px #3a3a3a">18</div>
<div class="t" style="left:-63.5px;top:481.525px;width:200px;height:26.4px;line-height:26.4px;text-align:right;font-size:11.73px;transform:scaleX(1.125);transform-origin:100% 50%;color:#3a3a3a;-webkit-text-stroke:0.15px #3a3a3a">260.01226</div>
<div class="t" style="left:22.5px;top:481.525px;width:200px;height:26.4px;line-height:26.4px;text-align:right;font-size:11.73px;transform:scaleX(1.125);transform-origin:100% 50%;color:#3a3a3a;-webkit-text-stroke:0.15px #3a3a3a">11.999727</div>
<div class="a" style="left:10px;top:501.44px;width:41.5px;height:16.43px;background:#efefef;border-bottom:1px solid #d5d5d5"></div>
<div class="a" style="left:51.5px;top:516.87px;width:171.5px;height:1px;background:#eef2f8"></div>
<div class="t" style="left:-149.5px;top:497.955px;width:200px;height:26.4px;line-height:26.4px;text-align:right;font-size:11.73px;transform:scaleX(1.125);transform-origin:100% 50%;color:#3a3a3a;-webkit-text-stroke:0.15px #3a3a3a">19</div>
<div class="t" style="left:-63.5px;top:497.955px;width:200px;height:26.4px;line-height:26.4px;text-align:right;font-size:11.73px;transform:scaleX(1.125);transform-origin:100% 50%;color:#3a3a3a;-webkit-text-stroke:0.15px #3a3a3a">260.01482</div>
<div class="t" style="left:22.5px;top:497.955px;width:200px;height:26.4px;line-height:26.4px;text-align:right;font-size:11.73px;transform:scaleX(1.125);transform-origin:100% 50%;color:#3a3a3a;-webkit-text-stroke:0.15px #3a3a3a">11.999672</div>
<div class="a" style="left:10px;top:517.87px;width:41.5px;height:16.43px;background:#efefef;border-bottom:1px solid #d5d5d5"></div>
<div class="a" style="left:51.5px;top:533.3px;width:171.5px;height:1px;background:#eef2f8"></div>
<div class="t" style="left:-149.5px;top:514.385px;width:200px;height:26.4px;line-height:26.4px;text-align:right;font-size:11.73px;transform:scaleX(1.125);transform-origin:100% 50%;color:#3a3a3a;-webkit-text-stroke:0.15px #3a3a3a">20</div>
<div class="t" style="left:-63.5px;top:514.385px;width:200px;height:26.4px;line-height:26.4px;text-align:right;font-size:11.73px;transform:scaleX(1.125);transform-origin:100% 50%;color:#3a3a3a;-webkit-text-stroke:0.15px #3a3a3a">260.0179</div>
<div class="t" style="left:22.5px;top:514.385px;width:200px;height:26.4px;line-height:26.4px;text-align:right;font-size:11.73px;transform:scaleX(1.125);transform-origin:100% 50%;color:#3a3a3a;-webkit-text-stroke:0.15px #3a3a3a">11.999606</div>
<div class="a" style="left:10px;top:534.3px;width:41.5px;height:16.43px;background:#efefef;border-bottom:1px solid #d5d5d5"></div>
<div class="a" style="left:51.5px;top:549.7299999999999px;width:171.5px;height:1px;background:#eef2f8"></div>
<div class="t" style="left:-149.5px;top:530.8149999999999px;width:200px;height:26.4px;line-height:26.4px;text-align:right;font-size:11.73px;transform:scaleX(1.125);transform-origin:100% 50%;color:#3a3a3a;-webkit-text-stroke:0.15px #3a3a3a">21</div>
<div class="t" style="left:-63.5px;top:530.8149999999999px;width:200px;height:26.4px;line-height:26.4px;text-align:right;font-size:11.73px;transform:scaleX(1.125);transform-origin:100% 50%;color:#3a3a3a;-webkit-text-stroke:0.15px #3a3a3a">260.02159</div>
<div class="t" style="left:22.5px;top:530.8149999999999px;width:200px;height:26.4px;line-height:26.4px;text-align:right;font-size:11.73px;transform:scaleX(1.125);transform-origin:100% 50%;color:#3a3a3a;-webkit-text-stroke:0.15px #3a3a3a">11.999527</div>
<div class="a" style="left:9px;top:544.5px;width:258px;height:18px;background:#f0f0f0"></div>
<div class="a" style="left:247px;top:172px;width:19px;height:372px;background:#f0f0f0"></div>
<svg class="a" style="left:252px;top:178px" width="10" height="6"><path d="M1 5L5 1L9 5" stroke="#555" stroke-width="1.3" fill="none"/></svg>
<div class="a" style="left:248px;top:188px;width:18px;height:13.5px;background:#cdcdcd"></div>
<svg class="a" style="left:252px;top:534px" width="10" height="6"><path d="M1 1L5 5L9 1" stroke="#555" stroke-width="1.3" fill="none"/></svg>
<div class="a" style="left:9px;top:544.5px;width:40px;height:17px;background:#fff"></div>
<div class="t" style="left:-73.5px;top:541.3px;width:200px;height:26px;line-height:26px;text-align:center;font-size:11.56px;transform:scaleX(1.125);transform-origin:50% 50%;color:#444">计...</div>
<div class="t" style="left:-31.599999999999994px;top:541.3px;width:200px;height:26px;line-height:26px;text-align:center;font-size:11.56px;transform:scaleX(1.125);transform-origin:50% 50%;color:#444">实...</div>
<div class="t" style="left:10.700000000000003px;top:541.3px;width:200px;height:26px;line-height:26px;text-align:center;font-size:11.56px;transform:scaleX(1.125);transform-origin:50% 50%;color:#444">计...</div>
<div class="t" style="left:53.0px;top:541.3px;width:200px;height:26px;line-height:26px;text-align:center;font-size:11.56px;transform:scaleX(1.125);transform-origin:50% 50%;color:#444">实...</div>
<div class="t" style="left:95.5px;top:541.3px;width:200px;height:26px;line-height:26px;text-align:center;font-size:11.56px;transform:scaleX(1.125);transform-origin:50% 50%;color:#444">计...</div>
<div class="t" style="left:138.0px;top:541.3px;width:200px;height:26px;line-height:26px;text-align:center;font-size:11.56px;transform:scaleX(1.125);transform-origin:50% 50%;color:#444">实...</div>
<div class="a" style="left:2px;top:566.2px;width:1020px;height:1px;background:#d6d6d6"></div>
<div class="a" style="left:57px;top:566px;width:65px;height:2.5px;background:#3f5fa8"></div>
<div class="a" style="left:10px;top:574px;width:11px;height:8px;background:linear-gradient(90deg,#6a7ad8 0 33%,#f0c030 33% 66%,#e03020 66%)"></div>
<div class="t" style="left:22px;top:566.8px;height:27.0px;line-height:27.0px;font-size:12.00px;transform:scaleX(1.125);transform-origin:0 50%;color:#333">模型</div>
<div class="a" style="left:61px;top:574px;width:10.5px;height:8px;background:#4a9a3a;border:1px solid #3a7a30"><div style="margin:1.5px 2.5px;width:3.5px;height:3px;background:#cfe8c0"></div></div>
<div class="t" style="left:73px;top:566.8px;height:27.0px;line-height:27.0px;font-size:12.00px;transform:scaleX(1.125);transform-origin:0 50%;color:#3a70c0">井曲线</div>
<div class="a" style="left:127px;top:574px;width:10.5px;height:8px;background:#2a6a3a;border:1px solid #1a5a2a"><div style="margin:1px 2px;width:4.5px;height:4px;background:#d83a2a"></div></div>
<div class="t" style="left:140px;top:566.8px;height:27.0px;line-height:27.0px;font-size:12.00px;transform:scaleX(1.125);transform-origin:0 50%;color:#333">模型场</div>
<div class="a" style="left:193px;top:574px;width:10.5px;height:8px;background:#2a6a3a;border:1px solid #1a5a2a"><div style="margin:1px 2px;width:4.5px;height:4px;background:#d83a2a"></div></div>
<div class="t" style="left:205px;top:566.8px;height:27.0px;line-height:27.0px;font-size:12.00px;transform:scaleX(1.125);transform-origin:0 50%;color:#333">动态场</div>
<svg class="a" style="left:993px;top:573px" width="8" height="9"><path d="M7 1L1 4.5L7 8Z" stroke="#888" fill="none" stroke-width="1.2"/></svg>
<svg class="a" style="left:1009px;top:573px" width="8" height="9"><path d="M1 1L7 4.5L1 8Z" stroke="#888" fill="none" stroke-width="1.2"/></svg>
<div class="a" style="left:2px;top:2px;width:1px;height:588px;background:#8a8a8a"></div>
<div class="a" style="left:2px;top:587.5px;width:1020px;height:2px;background:#f0f0f0"></div>
<div class="a" style="left:0px;top:589.8px;width:1024px;height:5.2px;background:#333"></div>
<div class="a" style="left:273px;top:150px;width:747px;height:308px;background:#fff"></div>
<div class="a" style="left:273px;top:462px;width:747px;height:101px;background:#fff"></div>
<div class="a" style="left:268px;top:150px;width:1.2px;height:413px;background:#c8c8c8"></div>
<div class="a" style="left:271.5px;top:150px;width:1px;height:413px;background:#d8d8d8"></div>
<div class="a" style="left:273px;top:460.8px;width:747px;height:1.2px;background:#d2d2d2"></div>
<div class="a" style="left:1019px;top:150px;width:1px;height:413px;background:#d8d8d8"></div>
<svg class="a" style="left:0;top:0" width="1024" height="598" viewBox="0 0 1024 598">
<line x1="430.4" y1="164" x2="430.4" y2="424.5" stroke="#e3e3e3" stroke-width="1"/>
<line x1="527.0" y1="164" x2="527.0" y2="424.5" stroke="#e3e3e3" stroke-width="1"/>
<line x1="623.6" y1="164" x2="623.6" y2="424.5" stroke="#e3e3e3" stroke-width="1"/>
<line x1="720.2" y1="164" x2="720.2" y2="424.5" stroke="#e3e3e3" stroke-width="1"/>
<line x1="816.8" y1="164" x2="816.8" y2="424.5" stroke="#e3e3e3" stroke-width="1"/>
<line x1="913.4" y1="164" x2="913.4" y2="424.5" stroke="#e3e3e3" stroke-width="1"/>
<line x1="333.8" y1="372.4" x2="913.4" y2="372.4" stroke="#e3e3e3" stroke-width="1"/>
<line x1="333.8" y1="320.3" x2="913.4" y2="320.3" stroke="#e3e3e3" stroke-width="1"/>
<line x1="333.8" y1="268.2" x2="913.4" y2="268.2" stroke="#e3e3e3" stroke-width="1"/>
<line x1="333.8" y1="216.1" x2="913.4" y2="216.1" stroke="#e3e3e3" stroke-width="1"/>
<line x1="333.8" y1="164" x2="333.8" y2="425" stroke="#777" stroke-width="1"/>
<line x1="333.8" y1="424.5" x2="913.4" y2="424.5" stroke="#d4d4d4" stroke-width="1"/>
<line x1="333.8" y1="425" x2="333.8" y2="427.5" stroke="#777" stroke-width="1"/>
<line x1="362.9" y1="425" x2="362.9" y2="427" stroke="#777" stroke-width="1"/>
<line x1="379.9" y1="425" x2="379.9" y2="427" stroke="#777" stroke-width="1"/>
<line x1="392.0" y1="425" x2="392.0" y2="427" stroke="#777" stroke-width="1"/>
<line x1="401.3" y1="425" x2="401.3" y2="427" stroke="#777" stroke-width="1"/>
<line x1="409.0" y1="425" x2="409.0" y2="427" stroke="#777" stroke-width="1"/>
<line x1="415.4" y1="425" x2="415.4" y2="427" stroke="#777" stroke-width="1"/>
<line x1="421.0" y1="425" x2="421.0" y2="427" stroke="#777" stroke-width="1"/>
<line x1="426.0" y1="425" x2="426.0" y2="427" stroke="#777" stroke-width="1"/>
<line x1="430.4" y1="425" x2="430.4" y2="427.5" stroke="#777" stroke-width="1"/>
<line x1="459.5" y1="425" x2="459.5" y2="427" stroke="#777" stroke-width="1"/>
<line x1="476.5" y1="425" x2="476.5" y2="427" stroke="#777" stroke-width="1"/>
<line x1="488.6" y1="425" x2="488.6" y2="427" stroke="#777" stroke-width="1"/>
<line x1="497.9" y1="425" x2="497.9" y2="427" stroke="#777" stroke-width="1"/>
<line x1="505.6" y1="425" x2="505.6" y2="427" stroke="#777" stroke-width="1"/>
<line x1="512.0" y1="425" x2="512.0" y2="427" stroke="#777" stroke-width="1"/>
<line x1="517.6" y1="425" x2="517.6" y2="427" stroke="#777" stroke-width="1"/>
<line x1="522.6" y1="425" x2="522.6" y2="427" stroke="#777" stroke-width="1"/>
<line x1="527.0" y1="425" x2="527.0" y2="427.5" stroke="#777" stroke-width="1"/>
<line x1="556.1" y1="425" x2="556.1" y2="427" stroke="#777" stroke-width="1"/>
<line x1="573.1" y1="425" x2="573.1" y2="427" stroke="#777" stroke-width="1"/>
<line x1="585.2" y1="425" x2="585.2" y2="427" stroke="#777" stroke-width="1"/>
<line x1="594.5" y1="425" x2="594.5" y2="427" stroke="#777" stroke-width="1"/>
<line x1="602.2" y1="425" x2="602.2" y2="427" stroke="#777" stroke-width="1"/>
<line x1="608.6" y1="425" x2="608.6" y2="427" stroke="#777" stroke-width="1"/>
<line x1="614.2" y1="425" x2="614.2" y2="427" stroke="#777" stroke-width="1"/>
<line x1="619.2" y1="425" x2="619.2" y2="427" stroke="#777" stroke-width="1"/>
<line x1="623.6" y1="425" x2="623.6" y2="427.5" stroke="#777" stroke-width="1"/>
<line x1="652.7" y1="425" x2="652.7" y2="427" stroke="#777" stroke-width="1"/>
<line x1="669.7" y1="425" x2="669.7" y2="427" stroke="#777" stroke-width="1"/>
<line x1="681.8" y1="425" x2="681.8" y2="427" stroke="#777" stroke-width="1"/>
<line x1="691.1" y1="425" x2="691.1" y2="427" stroke="#777" stroke-width="1"/>
<line x1="698.8" y1="425" x2="698.8" y2="427" stroke="#777" stroke-width="1"/>
<line x1="705.2" y1="425" x2="705.2" y2="427" stroke="#777" stroke-width="1"/>
<line x1="710.8" y1="425" x2="710.8" y2="427" stroke="#777" stroke-width="1"/>
<line x1="715.8" y1="425" x2="715.8" y2="427" stroke="#777" stroke-width="1"/>
<line x1="720.2" y1="425" x2="720.2" y2="427.5" stroke="#777" stroke-width="1"/>
<line x1="749.3" y1="425" x2="749.3" y2="427" stroke="#777" stroke-width="1"/>
<line x1="766.3" y1="425" x2="766.3" y2="427" stroke="#777" stroke-width="1"/>
<line x1="778.4" y1="425" x2="778.4" y2="427" stroke="#777" stroke-width="1"/>
<line x1="787.7" y1="425" x2="787.7" y2="427" stroke="#777" stroke-width="1"/>
<line x1="795.4" y1="425" x2="795.4" y2="427" stroke="#777" stroke-width="1"/>
<line x1="801.8" y1="425" x2="801.8" y2="427" stroke="#777" stroke-width="1"/>
<line x1="807.4" y1="425" x2="807.4" y2="427" stroke="#777" stroke-width="1"/>
<line x1="812.4" y1="425" x2="812.4" y2="427" stroke="#777" stroke-width="1"/>
<line x1="816.8" y1="425" x2="816.8" y2="427.5" stroke="#777" stroke-width="1"/>
<line x1="845.9" y1="425" x2="845.9" y2="427" stroke="#777" stroke-width="1"/>
<line x1="862.9" y1="425" x2="862.9" y2="427" stroke="#777" stroke-width="1"/>
<line x1="875.0" y1="425" x2="875.0" y2="427" stroke="#777" stroke-width="1"/>
<line x1="884.3" y1="425" x2="884.3" y2="427" stroke="#777" stroke-width="1"/>
<line x1="892.0" y1="425" x2="892.0" y2="427" stroke="#777" stroke-width="1"/>
<line x1="898.4" y1="425" x2="898.4" y2="427" stroke="#777" stroke-width="1"/>
<line x1="904.0" y1="425" x2="904.0" y2="427" stroke="#777" stroke-width="1"/>
<line x1="909.0" y1="425" x2="909.0" y2="427" stroke="#777" stroke-width="1"/>
<line x1="331.3" y1="424.5" x2="333.8" y2="424.5" stroke="#888" stroke-width="0.9"/>
<line x1="331.3" y1="408.8" x2="333.8" y2="408.8" stroke="#888" stroke-width="0.9"/>
<line x1="331.3" y1="399.6" x2="333.8" y2="399.6" stroke="#888" stroke-width="0.9"/>
<line x1="331.3" y1="393.1" x2="333.8" y2="393.1" stroke="#888" stroke-width="0.9"/>
<line x1="331.3" y1="388.1" x2="333.8" y2="388.1" stroke="#888" stroke-width="0.9"/>
<line x1="331.3" y1="384.0" x2="333.8" y2="384.0" stroke="#888" stroke-width="0.9"/>
<line x1="331.3" y1="380.5" x2="333.8" y2="380.5" stroke="#888" stroke-width="0.9"/>
<line x1="331.3" y1="377.4" x2="333.8" y2="377.4" stroke="#888" stroke-width="0.9"/>
<line x1="331.3" y1="374.8" x2="333.8" y2="374.8" stroke="#888" stroke-width="0.9"/>
<line x1="331.3" y1="372.4" x2="333.8" y2="372.4" stroke="#888" stroke-width="0.9"/>
<line x1="331.3" y1="356.7" x2="333.8" y2="356.7" stroke="#888" stroke-width="0.9"/>
<line x1="331.3" y1="347.5" x2="333.8" y2="347.5" stroke="#888" stroke-width="0.9"/>
<line x1="331.3" y1="341.0" x2="333.8" y2="341.0" stroke="#888" stroke-width="0.9"/>
<line x1="331.3" y1="336.0" x2="333.8" y2="336.0" stroke="#888" stroke-width="0.9"/>
<line x1="331.3" y1="331.9" x2="333.8" y2="331.9" stroke="#888" stroke-width="0.9"/>
<line x1="331.3" y1="328.4" x2="333.8" y2="328.4" stroke="#888" stroke-width="0.9"/>
<line x1="331.3" y1="325.3" x2="333.8" y2="325.3" stroke="#888" stroke-width="0.9"/>
<line x1="331.3" y1="322.7" x2="333.8" y2="322.7" stroke="#888" stroke-width="0.9"/>
<line x1="331.3" y1="320.3" x2="333.8" y2="320.3" stroke="#888" stroke-width="0.9"/>
<line x1="331.3" y1="304.6" x2="333.8" y2="304.6" stroke="#888" stroke-width="0.9"/>
<line x1="331.3" y1="295.4" x2="333.8" y2="295.4" stroke="#888" stroke-width="0.9"/>
<line x1="331.3" y1="288.9" x2="333.8" y2="288.9" stroke="#888" stroke-width="0.9"/>
<line x1="331.3" y1="283.9" x2="333.8" y2="283.9" stroke="#888" stroke-width="0.9"/>
<line x1="331.3" y1="279.8" x2="333.8" y2="279.8" stroke="#888" stroke-width="0.9"/>
<line x1="331.3" y1="276.3" x2="333.8" y2="276.3" stroke="#888" stroke-width="0.9"/>
<line x1="331.3" y1="273.2" x2="333.8" y2="273.2" stroke="#888" stroke-width="0.9"/>
<line x1="331.3" y1="270.6" x2="333.8" y2="270.6" stroke="#888" stroke-width="0.9"/>
<line x1="331.3" y1="268.2" x2="333.8" y2="268.2" stroke="#888" stroke-width="0.9"/>
<line x1="331.3" y1="252.5" x2="333.8" y2="252.5" stroke="#888" stroke-width="0.9"/>
<line x1="331.3" y1="243.3" x2="333.8" y2="243.3" stroke="#888" stroke-width="0.9"/>
<line x1="331.3" y1="236.8" x2="333.8" y2="236.8" stroke="#888" stroke-width="0.9"/>
<line x1="331.3" y1="231.8" x2="333.8" y2="231.8" stroke="#888" stroke-width="0.9"/>
<line x1="331.3" y1="227.7" x2="333.8" y2="227.7" stroke="#888" stroke-width="0.9"/>
<line x1="331.3" y1="224.2" x2="333.8" y2="224.2" stroke="#888" stroke-width="0.9"/>
<line x1="331.3" y1="221.1" x2="333.8" y2="221.1" stroke="#888" stroke-width="0.9"/>
<line x1="331.3" y1="218.5" x2="333.8" y2="218.5" stroke="#888" stroke-width="0.9"/>
<line x1="331.3" y1="216.1" x2="333.8" y2="216.1" stroke="#888" stroke-width="0.9"/>
<line x1="331.3" y1="200.4" x2="333.8" y2="200.4" stroke="#888" stroke-width="0.9"/>
<line x1="331.3" y1="191.2" x2="333.8" y2="191.2" stroke="#888" stroke-width="0.9"/>
<line x1="331.3" y1="184.7" x2="333.8" y2="184.7" stroke="#888" stroke-width="0.9"/>
<line x1="331.3" y1="179.7" x2="333.8" y2="179.7" stroke="#888" stroke-width="0.9"/>
<line x1="331.3" y1="175.6" x2="333.8" y2="175.6" stroke="#888" stroke-width="0.9"/>
<line x1="331.3" y1="172.1" x2="333.8" y2="172.1" stroke="#888" stroke-width="0.9"/>
<line x1="331.3" y1="169.0" x2="333.8" y2="169.0" stroke="#888" stroke-width="0.9"/>
<line x1="331.3" y1="166.4" x2="333.8" y2="166.4" stroke="#888" stroke-width="0.9"/>
<text x="333.8" y="437" font-size="8" text-anchor="middle" fill="#333" font-family="Liberation Sans">0.0001</text>
<text x="430.4" y="437" font-size="8" text-anchor="middle" fill="#333" font-family="Liberation Sans">0.001</text>
<text x="527.0" y="437" font-size="8" text-anchor="middle" fill="#333" font-family="Liberation Sans">0.01</text>
<text x="623.6" y="437" font-size="8" text-anchor="middle" fill="#333" font-family="Liberation Sans">0.1</text>
<text x="720.2" y="437" font-size="8" text-anchor="middle" fill="#333" font-family="Liberation Sans">1</text>
<text x="816.8" y="437" font-size="8" text-anchor="middle" fill="#333" font-family="Liberation Sans">10</text>
<text x="913.4" y="437" font-size="8" text-anchor="middle" fill="#333" font-family="Liberation Sans">100</text>
<text x="321.5" y="427.5" font-size="8" text-anchor="end" fill="#333" font-family="Liberation Sans">0.001</text>
<text x="321.5" y="375.4" font-size="8" text-anchor="end" fill="#333" font-family="Liberation Sans">0.01</text>
<text x="321.5" y="323.3" font-size="8" text-anchor="end" fill="#333" font-family="Liberation Sans">0.1</text>
<text x="321.5" y="271.2" font-size="8" text-anchor="end" fill="#333" font-family="Liberation Sans">1</text>
<text x="321.5" y="219.1" font-size="8" text-anchor="end" fill="#333" font-family="Liberation Sans">10</text>
<text x="321.5" y="167.0" font-size="8" text-anchor="end" fill="#333" font-family="Liberation Sans">100</text>
<text x="623" y="452.8" font-size="9.6" text-anchor="middle" fill="#333" font-family="Liberation Sans">时间(day)</text>
<text transform="translate(294.5,294) rotate(-90)" font-size="8" text-anchor="middle" fill="#333" font-family="Liberation Sans">压力(MPa)</text>
<path d="M339.6 421.2 C354.7 413.1 403.3 386.9 430.0 372.5 C456.7 358.1 481.7 344.6 500.0 334.7 C518.3 324.8 528.3 319.3 540.0 313.0 C551.7 306.7 560.0 301.8 570.0 297.0 C580.0 292.2 591.1 288.0 600.0 284.0 C608.9 280.0 614.8 276.9 623.2 273.0 C631.6 269.1 638.5 265.1 650.6 260.5 C662.7 255.9 681.1 249.4 695.7 245.2 C710.3 241.0 724.0 238.5 738.0 235.5 C752.0 232.5 764.5 229.9 779.8 227.3 C795.1 224.7 811.4 221.9 829.7 220.0 C848.0 218.1 879.5 216.5 889.5 215.8" stroke="#3a3ad8" stroke-width="1.2" fill="none"/>
<path d="M339.6 421.2 C354.7 413.1 403.3 386.9 430.0 372.5 C456.7 358.1 481.7 344.5 500.0 334.7 C518.3 324.9 528.3 319.5 540.0 313.5 C551.7 307.5 560.0 303.1 570.0 298.5 C580.0 293.9 591.1 289.4 600.0 285.6 C608.9 281.9 611.8 279.9 623.2 276.0 C634.6 272.1 652.2 265.9 668.4 262.4 C684.6 258.9 703.9 256.9 720.3 254.9 C736.6 253.0 755.2 251.3 766.5 250.7 C777.8 250.1 779.6 250.4 788.1 251.2 C796.6 252.0 810.0 254.3 817.5 255.7 C825.0 257.1 826.5 257.6 833.0 259.8 C839.5 262.0 849.8 265.8 856.2 269.0 C862.6 272.2 866.2 275.4 871.2 278.9 C876.2 282.4 882.9 288.1 886.1 290.0 C889.3 291.9 889.6 290.4 890.3 290.5" stroke="#2cc02c" stroke-width="1.3" fill="none"/>
<rect x="429.2" y="376.0" width="2.3" height="2.3" fill="#111"/>
<rect x="458.3" y="358.4" width="2.3" height="2.3" fill="#111"/>
<rect x="496.8" y="339.5" width="2.3" height="2.3" fill="#111"/>
<rect x="504.4" y="336.3" width="2.3" height="2.3" fill="#111"/>
<rect x="510.9" y="333.6" width="2.3" height="2.3" fill="#111"/>
<rect x="516.5" y="331.0" width="2.3" height="2.3" fill="#111"/>
<rect x="521.4" y="328.6" width="2.3" height="2.3" fill="#111"/>
<rect x="525.9" y="326.7" width="2.3" height="2.3" fill="#111"/>
<rect x="529.8" y="324.9" width="2.3" height="2.3" fill="#111"/>
<rect x="533.5" y="322.8" width="2.3" height="2.3" fill="#111"/>
<rect x="536.9" y="321.0" width="2.3" height="2.3" fill="#111"/>
<rect x="540.0" y="319.3" width="2.3" height="2.3" fill="#111"/>
<rect x="542.9" y="317.7" width="2.3" height="2.3" fill="#111"/>
<rect x="545.6" y="316.2" width="2.3" height="2.3" fill="#111"/>
<rect x="548.1" y="314.8" width="2.3" height="2.3" fill="#111"/>
<rect x="550.5" y="313.5" width="2.3" height="2.3" fill="#111"/>
<rect x="552.8" y="312.2" width="2.3" height="2.3" fill="#111"/>
<rect x="554.9" y="311.0" width="2.3" height="2.3" fill="#111"/>
<rect x="557.0" y="309.9" width="2.3" height="2.3" fill="#111"/>
<rect x="558.9" y="308.8" width="2.3" height="2.3" fill="#111"/>
<rect x="560.8" y="307.8" width="2.3" height="2.3" fill="#111"/>
<rect x="562.6" y="306.8" width="2.3" height="2.3" fill="#111"/>
<rect x="564.3" y="305.9" width="2.3" height="2.3" fill="#111"/>
<rect x="565.9" y="305.0" width="2.3" height="2.3" fill="#111"/>
<rect x="567.5" y="304.1" width="2.3" height="2.3" fill="#111"/>
<rect x="569.0" y="303.3" width="2.3" height="2.3" fill="#111"/>
<rect x="570.5" y="302.5" width="2.3" height="2.3" fill="#111"/>
<rect x="571.9" y="301.7" width="2.3" height="2.3" fill="#111"/>
<rect x="573.3" y="300.9" width="2.3" height="2.3" fill="#111"/>
<rect x="574.6" y="300.2" width="2.3" height="2.3" fill="#111"/>
<rect x="575.9" y="299.5" width="2.3" height="2.3" fill="#111"/>
<rect x="577.2" y="298.6" width="2.3" height="2.3" fill="#111"/>
<rect x="578.4" y="297.9" width="2.3" height="2.3" fill="#111"/>
<rect x="579.6" y="297.1" width="2.3" height="2.3" fill="#111"/>
<rect x="580.7" y="296.3" width="2.3" height="2.3" fill="#111"/>
<rect x="581.9" y="295.6" width="2.3" height="2.3" fill="#111"/>
<rect x="582.9" y="294.9" width="2.3" height="2.3" fill="#111"/>
<rect x="584.0" y="294.2" width="2.3" height="2.3" fill="#111"/>
<rect x="585.0" y="293.5" width="2.3" height="2.3" fill="#111"/>
<rect x="586.1" y="292.9" width="2.3" height="2.3" fill="#111"/>
<rect x="587.0" y="292.2" width="2.3" height="2.3" fill="#111"/>
<rect x="588.0" y="291.6" width="2.3" height="2.3" fill="#111"/>
<rect x="589.0" y="291.0" width="2.3" height="2.3" fill="#111"/>
<rect x="589.9" y="290.4" width="2.3" height="2.3" fill="#111"/>
<rect x="590.8" y="289.8" width="2.3" height="2.3" fill="#111"/>
<rect x="591.7" y="289.2" width="2.3" height="2.3" fill="#111"/>
<rect x="592.5" y="288.7" width="2.3" height="2.3" fill="#111"/>
<rect x="593.4" y="288.1" width="2.3" height="2.3" fill="#111"/>
<rect x="594.2" y="287.6" width="2.3" height="2.3" fill="#111"/>
<rect x="595.0" y="287.0" width="2.3" height="2.3" fill="#111"/>
<rect x="595.8" y="286.5" width="2.3" height="2.3" fill="#111"/>
<rect x="596.6" y="286.0" width="2.3" height="2.3" fill="#111"/>
<rect x="597.4" y="285.5" width="2.3" height="2.3" fill="#111"/>
<rect x="598.1" y="285.0" width="2.3" height="2.3" fill="#111"/>
<rect x="598.9" y="284.5" width="2.3" height="2.3" fill="#111"/>
<rect x="599.6" y="284.1" width="2.3" height="2.3" fill="#111"/>
<rect x="600.3" y="283.6" width="2.3" height="2.3" fill="#111"/>
<rect x="601.0" y="283.1" width="2.3" height="2.3" fill="#111"/>
<rect x="601.7" y="282.7" width="2.3" height="2.3" fill="#111"/>
<rect x="602.4" y="282.2" width="2.3" height="2.3" fill="#111"/>
<rect x="603.1" y="281.8" width="2.3" height="2.3" fill="#111"/>
<rect x="603.7" y="281.4" width="2.3" height="2.3" fill="#111"/>
<rect x="604.4" y="281.0" width="2.3" height="2.3" fill="#111"/>
<rect x="605.0" y="280.7" width="2.3" height="2.3" fill="#111"/>
<rect x="605.6" y="280.4" width="2.3" height="2.3" fill="#111"/>
<rect x="606.3" y="280.1" width="2.3" height="2.3" fill="#111"/>
<rect x="606.9" y="279.8" width="2.3" height="2.3" fill="#111"/>
<rect x="607.5" y="279.6" width="2.3" height="2.3" fill="#111"/>
<rect x="608.1" y="279.3" width="2.3" height="2.3" fill="#111"/>
<rect x="608.7" y="279.0" width="2.3" height="2.3" fill="#111"/>
<rect x="609.2" y="278.8" width="2.3" height="2.3" fill="#111"/>
<rect x="609.8" y="278.5" width="2.3" height="2.3" fill="#111"/>
<rect x="610.4" y="278.2" width="2.3" height="2.3" fill="#111"/>
<rect x="610.9" y="278.0" width="2.3" height="2.3" fill="#111"/>
<rect x="611.5" y="277.7" width="2.3" height="2.3" fill="#111"/>
<rect x="612.0" y="277.5" width="2.3" height="2.3" fill="#111"/>
<rect x="612.6" y="277.2" width="2.3" height="2.3" fill="#111"/>
<rect x="613.1" y="277.0" width="2.3" height="2.3" fill="#111"/>
<rect x="613.6" y="276.7" width="2.3" height="2.3" fill="#111"/>
<rect x="614.1" y="276.5" width="2.3" height="2.3" fill="#111"/>
<rect x="614.6" y="276.3" width="2.3" height="2.3" fill="#111"/>
<rect x="615.1" y="276.0" width="2.3" height="2.3" fill="#111"/>
<rect x="615.6" y="275.8" width="2.3" height="2.3" fill="#111"/>
<rect x="616.1" y="275.6" width="2.3" height="2.3" fill="#111"/>
<rect x="616.6" y="275.4" width="2.3" height="2.3" fill="#111"/>
<rect x="617.1" y="275.1" width="2.3" height="2.3" fill="#111"/>
<rect x="617.6" y="274.9" width="2.3" height="2.3" fill="#111"/>
<rect x="618.0" y="274.7" width="2.3" height="2.3" fill="#111"/>
<rect x="618.5" y="274.5" width="2.3" height="2.3" fill="#111"/>
<rect x="619.0" y="274.3" width="2.3" height="2.3" fill="#111"/>
<rect x="619.4" y="274.1" width="2.3" height="2.3" fill="#111"/>
<rect x="619.9" y="273.9" width="2.3" height="2.3" fill="#111"/>
<rect x="620.3" y="273.7" width="2.3" height="2.3" fill="#111"/>
<rect x="620.7" y="273.5" width="2.3" height="2.3" fill="#111"/>
<rect x="621.2" y="273.3" width="2.3" height="2.3" fill="#111"/>
<rect x="621.6" y="273.1" width="2.3" height="2.3" fill="#111"/>
<rect x="622.0" y="272.9" width="2.3" height="2.3" fill="#111"/>
<rect x="429.2" y="373.6" width="2.3" height="2.3" fill="#e82020"/>
<rect x="458.3" y="360.2" width="2.3" height="2.3" fill="#e82020"/>
<rect x="475.3" y="351.6" width="2.3" height="2.3" fill="#e82020"/>
<rect x="487.4" y="344.2" width="2.3" height="2.3" fill="#e82020"/>
<rect x="496.8" y="344.5" width="2.3" height="2.3" fill="#e82020"/>
<rect x="504.4" y="340.2" width="2.3" height="2.3" fill="#e82020"/>
<rect x="510.9" y="338.6" width="2.3" height="2.3" fill="#e82020"/>
<rect x="516.5" y="333.6" width="2.3" height="2.3" fill="#e82020"/>
<rect x="521.4" y="331.3" width="2.3" height="2.3" fill="#e82020"/>
<rect x="525.9" y="329.5" width="2.3" height="2.3" fill="#e82020"/>
<rect x="529.8" y="327.1" width="2.3" height="2.3" fill="#e82020"/>
<rect x="533.5" y="324.0" width="2.3" height="2.3" fill="#e82020"/>
<rect x="536.9" y="321.9" width="2.3" height="2.3" fill="#e82020"/>
<rect x="540.0" y="320.4" width="2.3" height="2.3" fill="#e82020"/>
<rect x="542.9" y="319.0" width="2.3" height="2.3" fill="#e82020"/>
<rect x="545.6" y="317.7" width="2.3" height="2.3" fill="#e82020"/>
<rect x="548.1" y="316.4" width="2.3" height="2.3" fill="#e82020"/>
<rect x="550.5" y="315.0" width="2.3" height="2.3" fill="#e82020"/>
<rect x="552.8" y="313.7" width="2.3" height="2.3" fill="#e82020"/>
<rect x="554.9" y="312.5" width="2.3" height="2.3" fill="#e82020"/>
<rect x="557.0" y="311.4" width="2.3" height="2.3" fill="#e82020"/>
<rect x="558.9" y="310.3" width="2.3" height="2.3" fill="#e82020"/>
<rect x="560.8" y="309.2" width="2.3" height="2.3" fill="#e82020"/>
<rect x="562.6" y="308.2" width="2.3" height="2.3" fill="#e82020"/>
<rect x="564.3" y="307.2" width="2.3" height="2.3" fill="#e82020"/>
<rect x="565.9" y="306.3" width="2.3" height="2.3" fill="#e82020"/>
<rect x="567.5" y="305.4" width="2.3" height="2.3" fill="#e82020"/>
<rect x="569.0" y="304.6" width="2.3" height="2.3" fill="#e82020"/>
<rect x="570.5" y="303.7" width="2.3" height="2.3" fill="#e82020"/>
<rect x="571.9" y="302.9" width="2.3" height="2.3" fill="#e82020"/>
<rect x="573.3" y="302.2" width="2.3" height="2.3" fill="#e82020"/>
<rect x="574.6" y="301.4" width="2.3" height="2.3" fill="#e82020"/>
<rect x="575.9" y="300.6" width="2.3" height="2.3" fill="#e82020"/>
<rect x="577.2" y="299.7" width="2.3" height="2.3" fill="#e82020"/>
<rect x="578.4" y="298.7" width="2.3" height="2.3" fill="#e82020"/>
<rect x="579.6" y="297.8" width="2.3" height="2.3" fill="#e82020"/>
<rect x="580.7" y="297.0" width="2.3" height="2.3" fill="#e82020"/>
<rect x="581.9" y="296.1" width="2.3" height="2.3" fill="#e82020"/>
<rect x="582.9" y="295.3" width="2.3" height="2.3" fill="#e82020"/>
<rect x="584.0" y="294.5" width="2.3" height="2.3" fill="#e82020"/>
<rect x="585.0" y="293.7" width="2.3" height="2.3" fill="#e82020"/>
<rect x="586.1" y="292.9" width="2.3" height="2.3" fill="#e82020"/>
<rect x="587.0" y="292.2" width="2.3" height="2.3" fill="#e82020"/>
<rect x="588.0" y="291.4" width="2.3" height="2.3" fill="#e82020"/>
<rect x="589.0" y="290.7" width="2.3" height="2.3" fill="#e82020"/>
<rect x="589.9" y="290.0" width="2.3" height="2.3" fill="#e82020"/>
<rect x="590.8" y="289.3" width="2.3" height="2.3" fill="#e82020"/>
<rect x="591.7" y="288.6" width="2.3" height="2.3" fill="#e82020"/>
<rect x="592.5" y="288.0" width="2.3" height="2.3" fill="#e82020"/>
<rect x="593.4" y="287.3" width="2.3" height="2.3" fill="#e82020"/>
<rect x="594.2" y="286.7" width="2.3" height="2.3" fill="#e82020"/>
<rect x="595.0" y="286.1" width="2.3" height="2.3" fill="#e82020"/>
<rect x="595.8" y="285.5" width="2.3" height="2.3" fill="#e82020"/>
<rect x="596.6" y="284.9" width="2.3" height="2.3" fill="#e82020"/>
<rect x="597.4" y="284.3" width="2.3" height="2.3" fill="#e82020"/>
<rect x="598.1" y="283.7" width="2.3" height="2.3" fill="#e82020"/>
<rect x="598.9" y="283.1" width="2.3" height="2.3" fill="#e82020"/>
<rect x="599.6" y="282.8" width="2.3" height="2.3" fill="#e82020"/>
<rect x="600.3" y="282.4" width="2.3" height="2.3" fill="#e82020"/>
<rect x="601.0" y="282.0" width="2.3" height="2.3" fill="#e82020"/>
<rect x="601.7" y="281.6" width="2.3" height="2.3" fill="#e82020"/>
<rect x="602.4" y="281.3" width="2.3" height="2.3" fill="#e82020"/>
<rect x="603.1" y="280.9" width="2.3" height="2.3" fill="#e82020"/>
<rect x="603.7" y="280.6" width="2.3" height="2.3" fill="#e82020"/>
<rect x="604.4" y="280.2" width="2.3" height="2.3" fill="#e82020"/>
<rect x="605.0" y="279.9" width="2.3" height="2.3" fill="#e82020"/>
<rect x="605.6" y="279.5" width="2.3" height="2.3" fill="#e82020"/>
<rect x="606.3" y="279.2" width="2.3" height="2.3" fill="#e82020"/>
<rect x="606.9" y="278.9" width="2.3" height="2.3" fill="#e82020"/>
<rect x="607.5" y="278.6" width="2.3" height="2.3" fill="#e82020"/>
<rect x="608.1" y="278.3" width="2.3" height="2.3" fill="#e82020"/>
<rect x="608.7" y="277.9" width="2.3" height="2.3" fill="#e82020"/>
<rect x="609.2" y="277.6" width="2.3" height="2.3" fill="#e82020"/>
<rect x="609.8" y="277.3" width="2.3" height="2.3" fill="#e82020"/>
<rect x="610.4" y="277.0" width="2.3" height="2.3" fill="#e82020"/>
<rect x="610.9" y="276.7" width="2.3" height="2.3" fill="#e82020"/>
<rect x="611.5" y="276.5" width="2.3" height="2.3" fill="#e82020"/>
<rect x="612.0" y="276.2" width="2.3" height="2.3" fill="#e82020"/>
<rect x="612.6" y="275.9" width="2.3" height="2.3" fill="#e82020"/>
<rect x="613.1" y="275.6" width="2.3" height="2.3" fill="#e82020"/>
<rect x="613.6" y="275.3" width="2.3" height="2.3" fill="#e82020"/>
<rect x="614.1" y="275.1" width="2.3" height="2.3" fill="#e82020"/>
<rect x="614.6" y="274.8" width="2.3" height="2.3" fill="#e82020"/>
<rect x="615.1" y="274.5" width="2.3" height="2.3" fill="#e82020"/>
<rect x="615.6" y="274.3" width="2.3" height="2.3" fill="#e82020"/>
<rect x="616.1" y="274.0" width="2.3" height="2.3" fill="#e82020"/>
<rect x="616.6" y="273.7" width="2.3" height="2.3" fill="#e82020"/>
<rect x="617.1" y="273.5" width="2.3" height="2.3" fill="#e82020"/>
<rect x="617.6" y="273.2" width="2.3" height="2.3" fill="#e82020"/>
<rect x="618.0" y="273.0" width="2.3" height="2.3" fill="#e82020"/>
<rect x="618.5" y="272.7" width="2.3" height="2.3" fill="#e82020"/>
<rect x="619.0" y="272.5" width="2.3" height="2.3" fill="#e82020"/>
<rect x="619.4" y="272.3" width="2.3" height="2.3" fill="#e82020"/>
<rect x="619.9" y="272.0" width="2.3" height="2.3" fill="#e82020"/>
<rect x="620.3" y="271.8" width="2.3" height="2.3" fill="#e82020"/>
<rect x="620.7" y="271.5" width="2.3" height="2.3" fill="#e82020"/>
<rect x="621.2" y="271.3" width="2.3" height="2.3" fill="#e82020"/>
<rect x="621.6" y="271.1" width="2.3" height="2.3" fill="#e82020"/>
<rect x="622.0" y="270.9" width="2.3" height="2.3" fill="#e82020"/>
<rect x="622.4" y="270.7" width="2.3" height="2.3" fill="#e82020"/>
<rect x="623.7" y="270.1" width="2.3" height="2.3" fill="#e82020"/>
<rect x="624.9" y="269.6" width="2.3" height="2.3" fill="#e82020"/>
<rect x="626.1" y="269.1" width="2.3" height="2.3" fill="#e82020"/>
<rect x="627.2" y="268.6" width="2.3" height="2.3" fill="#e82020"/>
<rect x="628.3" y="268.2" width="2.3" height="2.3" fill="#e82020"/>
<rect x="629.4" y="267.7" width="2.3" height="2.3" fill="#e82020"/>
<rect x="630.4" y="267.2" width="2.3" height="2.3" fill="#e82020"/>
<rect x="631.5" y="266.8" width="2.3" height="2.3" fill="#e82020"/>
<rect x="632.5" y="266.4" width="2.3" height="2.3" fill="#e82020"/>
<rect x="633.5" y="265.9" width="2.3" height="2.3" fill="#e82020"/>
<rect x="634.4" y="265.5" width="2.3" height="2.3" fill="#e82020"/>
<path d="M623.2 272.0 C628.0 269.9 644.5 261.9 652.0 259.6 C659.5 257.3 662.2 258.4 668.4 258.0 C674.5 257.6 685.5 257.1 688.9 256.9" stroke="#e82020" stroke-width="2.6" fill="none"/>
<path d="M605.2 282.3 C608.2 280.9 615.6 277.9 623.2 274.0 C630.8 270.1 643.1 262.9 650.6 259.0 C658.1 255.1 660.9 253.8 668.4 250.8 C675.9 247.8 687.1 243.8 695.7 241.2 C704.4 238.6 713.2 236.5 720.3 235.0 C727.3 233.5 728.9 233.7 738.0 232.3 C747.1 230.9 768.7 227.6 774.8 226.6" stroke="#111" stroke-width="2.0" fill="none"/>
<line x1="778" y1="226.2" x2="786" y2="225.3" stroke="#111" stroke-width="2.2"/>
<line x1="790" y1="224.9" x2="793" y2="224.6" stroke="#111" stroke-width="2.2"/>
<line x1="803" y1="223.4" x2="807" y2="223.0" stroke="#111" stroke-width="2.2"/>
<line x1="811" y1="222.5" x2="820" y2="221.7" stroke="#111" stroke-width="2.2"/>
<line x1="826" y1="221.3" x2="860" y2="219.5" stroke="#111" stroke-width="2.2"/>
<rect x="687.7" y="255.7" width="2.4" height="2.4" fill="#e82020"/>
<rect x="690.8" y="256.8" width="2.4" height="2.4" fill="#e82020"/>
<rect x="694.5" y="258.4" width="2.4" height="2.4" fill="#e82020"/>
<rect x="698.8" y="256.3" width="2.4" height="2.4" fill="#e82020"/>
<rect x="702.7" y="254.3" width="2.4" height="2.4" fill="#e82020"/>
<rect x="706.8" y="256.8" width="2.4" height="2.4" fill="#e82020"/>
<rect x="710.8" y="259.8" width="2.4" height="2.4" fill="#e82020"/>
<rect x="712.7" y="256.4" width="2.4" height="2.4" fill="#e82020"/>
<rect x="714.5" y="253.0" width="2.4" height="2.4" fill="#e82020"/>
<rect x="716.4" y="249.6" width="2.4" height="2.4" fill="#e82020"/>
<rect x="719.1" y="252.0" width="2.4" height="2.4" fill="#e82020"/>
<rect x="721.8" y="254.3" width="2.4" height="2.4" fill="#e82020"/>
<rect x="724.8" y="254.8" width="2.4" height="2.4" fill="#e82020"/>
<rect x="728.7" y="255.7" width="2.4" height="2.4" fill="#e82020"/>
<rect x="731.4" y="257.8" width="2.4" height="2.4" fill="#e82020"/>
<rect x="734.2" y="259.8" width="2.4" height="2.4" fill="#e82020"/>
<rect x="738.8" y="256.1" width="2.4" height="2.4" fill="#e82020"/>
<rect x="741.3" y="259.4" width="2.4" height="2.4" fill="#e82020"/>
<rect x="743.8" y="262.8" width="2.4" height="2.4" fill="#e82020"/>
<rect x="746.3" y="259.9" width="2.4" height="2.4" fill="#e82020"/>
<rect x="748.8" y="257.0" width="2.4" height="2.4" fill="#e82020"/>
<rect x="752.8" y="255.8" width="2.4" height="2.4" fill="#e82020"/>
<rect x="756.8" y="254.8" width="2.4" height="2.4" fill="#e82020"/>
<rect x="760.4" y="254.5" width="2.4" height="2.4" fill="#e82020"/>
<rect x="764.5" y="250.3" width="2.4" height="2.4" fill="#e82020"/>
<rect x="766.6" y="253.7" width="2.4" height="2.4" fill="#e82020"/>
<rect x="768.7" y="257.0" width="2.4" height="2.4" fill="#e82020"/>
<rect x="770.8" y="260.8" width="2.4" height="2.4" fill="#e82020"/>
<rect x="772.7" y="265.2" width="2.6" height="2.6" fill="#e82020"/>
<rect x="790.2" y="261.0" width="2.6" height="2.6" fill="#e82020"/>
<rect x="802.7" y="257.0" width="2.4" height="2.4" fill="#e82020"/>
<rect x="805.6" y="258.7" width="2.4" height="2.4" fill="#e82020"/>
<rect x="808.5" y="260.3" width="2.4" height="2.4" fill="#e82020"/>
<rect x="812.8" y="258.8" width="2.4" height="2.4" fill="#e82020"/>
<rect x="816.8" y="258.6" width="2.4" height="2.4" fill="#e82020"/>
<rect x="820.7" y="259.2" width="2.4" height="2.4" fill="#e82020"/>
<rect x="824.6" y="259.7" width="2.4" height="2.4" fill="#e82020"/>
<rect x="828.5" y="260.3" width="2.4" height="2.4" fill="#e82020"/>
<rect x="832.8" y="260.8" width="2.4" height="2.4" fill="#e82020"/>
<rect x="836.8" y="261.8" width="2.4" height="2.4" fill="#e82020"/>
<rect x="840.8" y="263.3" width="2.4" height="2.4" fill="#e82020"/>
<rect x="845.1" y="264.4" width="2.4" height="2.4" fill="#e82020"/>
<rect x="848.8" y="264.8" width="2.4" height="2.4" fill="#e82020"/>
<rect x="852.8" y="265.3" width="2.4" height="2.4" fill="#e82020"/>
<rect x="858.3" y="266.0" width="2.6" height="2.6" fill="#e82020"/>
<path d="M835 262 L846.3 265.6 L859.6 267.3" stroke="#e82020" stroke-width="2.4" fill="none"/>
<rect x="924.5" y="273.5" width="89" height="70" fill="#fff" stroke="#e3e3e3"/>
<rect x="940.8" y="283.4" width="2.4" height="2.4" fill="#111"/>
<rect x="940.8" y="299.1" width="2.4" height="2.4" fill="#e82020"/>
<line x1="931" y1="315.7" x2="949" y2="315.7" stroke="#3a3ad8" stroke-width="1.3"/>
<line x1="931" y1="331" x2="949" y2="331" stroke="#2cc02c" stroke-width="1.3"/>
<text transform="translate(952.5,289.20000000000005) scale(1.125,1)" font-size="12" fill="#333" font-family="Liberation Sans">实测压力</text>
<text transform="translate(952.5,304.90000000000003) scale(1.125,1)" font-size="12" fill="#333" font-family="Liberation Sans">实测导数</text>
<text transform="translate(952.5,320.3) scale(1.125,1)" font-size="12" fill="#333" font-family="Liberation Sans">计算压力</text>
<text transform="translate(952.5,335.6) scale(1.125,1)" font-size="12" fill="#333" font-family="Liberation Sans">计算导数</text>
<rect x="402.5" y="474.1" width="407.6" height="55.3" fill="#fcecec"/>
<line x1="332.1" y1="474.1" x2="332.1" y2="529.4" stroke="#dadada" stroke-width="0.9"/>
<line x1="345.4" y1="474.1" x2="345.4" y2="529.4" stroke="#dadada" stroke-width="0.9"/>
<line x1="358.6" y1="474.1" x2="358.6" y2="529.4" stroke="#dadada" stroke-width="0.9"/>
<line x1="371.9" y1="474.1" x2="371.9" y2="529.4" stroke="#dadada" stroke-width="0.9"/>
<line x1="385.2" y1="474.1" x2="385.2" y2="529.4" stroke="#dadada" stroke-width="0.9"/>
<line x1="398.5" y1="474.1" x2="398.5" y2="529.4" stroke="#dadada" stroke-width="0.9"/>
<line x1="411.7" y1="474.1" x2="411.7" y2="529.4" stroke="#e6cfcf" stroke-width="0.9"/>
<line x1="425.0" y1="474.1" x2="425.0" y2="529.4" stroke="#e6cfcf" stroke-width="0.9"/>
<line x1="438.3" y1="474.1" x2="438.3" y2="529.4" stroke="#e6cfcf" stroke-width="0.9"/>
<line x1="451.6" y1="474.1" x2="451.6" y2="529.4" stroke="#e6cfcf" stroke-width="0.9"/>
<line x1="464.9" y1="474.1" x2="464.9" y2="529.4" stroke="#e6cfcf" stroke-width="0.9"/>
<line x1="478.1" y1="474.1" x2="478.1" y2="529.4" stroke="#e6cfcf" stroke-width="0.9"/>
<line x1="491.4" y1="474.1" x2="491.4" y2="529.4" stroke="#e6cfcf" stroke-width="0.9"/>
<line x1="504.7" y1="474.1" x2="504.7" y2="529.4" stroke="#e6cfcf" stroke-width="0.9"/>
<line x1="518.0" y1="474.1" x2="518.0" y2="529.4" stroke="#e6cfcf" stroke-width="0.9"/>
<line x1="531.2" y1="474.1" x2="531.2" y2="529.4" stroke="#e6cfcf" stroke-width="0.9"/>
<line x1="544.5" y1="474.1" x2="544.5" y2="529.4" stroke="#e6cfcf" stroke-width="0.9"/>
<line x1="557.8" y1="474.1" x2="557.8" y2="529.4" stroke="#e6cfcf" stroke-width="0.9"/>
<line x1="571.1" y1="474.1" x2="571.1" y2="529.4" stroke="#e6cfcf" stroke-width="0.9"/>
<line x1="584.4" y1="474.1" x2="584.4" y2="529.4" stroke="#e6cfcf" stroke-width="0.9"/>
<line x1="597.6" y1="474.1" x2="597.6" y2="529.4" stroke="#e6cfcf" stroke-width="0.9"/>
<line x1="610.9" y1="474.1" x2="610.9" y2="529.4" stroke="#e6cfcf" stroke-width="0.9"/>
<line x1="624.2" y1="474.1" x2="624.2" y2="529.4" stroke="#e6cfcf" stroke-width="0.9"/>
<line x1="637.5" y1="474.1" x2="637.5" y2="529.4" stroke="#e6cfcf" stroke-width="0.9"/>
<line x1="650.8" y1="474.1" x2="650.8" y2="529.4" stroke="#e6cfcf" stroke-width="0.9"/>
<line x1="664.0" y1="474.1" x2="664.0" y2="529.4" stroke="#e6cfcf" stroke-width="0.9"/>
<line x1="677.3" y1="474.1" x2="677.3" y2="529.4" stroke="#e6cfcf" stroke-width="0.9"/>
<line x1="690.6" y1="474.1" x2="690.6" y2="529.4" stroke="#e6cfcf" stroke-width="0.9"/>
<line x1="703.9" y1="474.1" x2="703.9" y2="529.4" stroke="#e6cfcf" stroke-width="0.9"/>
<line x1="717.1" y1="474.1" x2="717.1" y2="529.4" stroke="#e6cfcf" stroke-width="0.9"/>
<line x1="730.4" y1="474.1" x2="730.4" y2="529.4" stroke="#e6cfcf" stroke-width="0.9"/>
<line x1="743.7" y1="474.1" x2="743.7" y2="529.4" stroke="#e6cfcf" stroke-width="0.9"/>
<line x1="757.0" y1="474.1" x2="757.0" y2="529.4" stroke="#e6cfcf" stroke-width="0.9"/>
<line x1="770.3" y1="474.1" x2="770.3" y2="529.4" stroke="#e6cfcf" stroke-width="0.9"/>
<line x1="783.5" y1="474.1" x2="783.5" y2="529.4" stroke="#e6cfcf" stroke-width="0.9"/>
<line x1="796.8" y1="474.1" x2="796.8" y2="529.4" stroke="#e6cfcf" stroke-width="0.9"/>
<line x1="810.1" y1="474.1" x2="810.1" y2="529.4" stroke="#dadada" stroke-width="0.9"/>
<line x1="823.4" y1="474.1" x2="823.4" y2="529.4" stroke="#dadada" stroke-width="0.9"/>
<line x1="836.6" y1="474.1" x2="836.6" y2="529.4" stroke="#dadada" stroke-width="0.9"/>
<line x1="849.9" y1="474.1" x2="849.9" y2="529.4" stroke="#dadada" stroke-width="0.9"/>
<line x1="863.2" y1="474.1" x2="863.2" y2="529.4" stroke="#dadada" stroke-width="0.9"/>
<line x1="876.5" y1="474.1" x2="876.5" y2="529.4" stroke="#dadada" stroke-width="0.9"/>
<line x1="889.8" y1="474.1" x2="889.8" y2="529.4" stroke="#dadada" stroke-width="0.9"/>
<line x1="903.0" y1="474.1" x2="903.0" y2="529.4" stroke="#dadada" stroke-width="0.9"/>
<line x1="916.3" y1="474.1" x2="916.3" y2="529.4" stroke="#dadada" stroke-width="0.9"/>
<line x1="318.8" y1="522.5" x2="402.5" y2="522.5" stroke="#e0e0e0" stroke-width="0.9"/>
<line x1="402.5" y1="522.5" x2="810.1" y2="522.5" stroke="#f0d6d6" stroke-width="0.9"/>
<line x1="810.1" y1="522.5" x2="916.3" y2="522.5" stroke="#e0e0e0" stroke-width="0.9"/>
<line x1="318.8" y1="515.6" x2="402.5" y2="515.6" stroke="#e0e0e0" stroke-width="0.9"/>
<line x1="402.5" y1="515.6" x2="810.1" y2="515.6" stroke="#f0d6d6" stroke-width="0.9"/>
<line x1="810.1" y1="515.6" x2="916.3" y2="515.6" stroke="#e0e0e0" stroke-width="0.9"/>
<line x1="318.8" y1="508.7" x2="402.5" y2="508.7" stroke="#e0e0e0" stroke-width="0.9"/>
<line x1="402.5" y1="508.7" x2="810.1" y2="508.7" stroke="#f0d6d6" stroke-width="0.9"/>
<line x1="810.1" y1="508.7" x2="916.3" y2="508.7" stroke="#e0e0e0" stroke-width="0.9"/>
<line x1="318.8" y1="501.8" x2="402.5" y2="501.8" stroke="#e0e0e0" stroke-width="0.9"/>
<line x1="402.5" y1="501.8" x2="810.1" y2="501.8" stroke="#f0d6d6" stroke-width="0.9"/>
<line x1="810.1" y1="501.8" x2="916.3" y2="501.8" stroke="#e0e0e0" stroke-width="0.9"/>
<line x1="318.8" y1="494.8" x2="402.5" y2="494.8" stroke="#e0e0e0" stroke-width="0.9"/>
<line x1="402.5" y1="494.8" x2="810.1" y2="494.8" stroke="#f0d6d6" stroke-width="0.9"/>
<line x1="810.1" y1="494.8" x2="916.3" y2="494.8" stroke="#e0e0e0" stroke-width="0.9"/>
<line x1="318.8" y1="487.9" x2="402.5" y2="487.9" stroke="#e0e0e0" stroke-width="0.9"/>
<line x1="402.5" y1="487.9" x2="810.1" y2="487.9" stroke="#f0d6d6" stroke-width="0.9"/>
<line x1="810.1" y1="487.9" x2="916.3" y2="487.9" stroke="#e0e0e0" stroke-width="0.9"/>
<line x1="318.8" y1="481.0" x2="402.5" y2="481.0" stroke="#e0e0e0" stroke-width="0.9"/>
<line x1="402.5" y1="481.0" x2="810.1" y2="481.0" stroke="#f0d6d6" stroke-width="0.9"/>
<line x1="810.1" y1="481.0" x2="916.3" y2="481.0" stroke="#e0e0e0" stroke-width="0.9"/>
<line x1="318.8" y1="474.1" x2="402.5" y2="474.1" stroke="#e0e0e0" stroke-width="0.9"/>
<line x1="402.5" y1="474.1" x2="810.1" y2="474.1" stroke="#f0d6d6" stroke-width="0.9"/>
<line x1="810.1" y1="474.1" x2="916.3" y2="474.1" stroke="#e0e0e0" stroke-width="0.9"/>
<line x1="380.1" y1="474.1" x2="380.1" y2="529.4" stroke="#f0a0a0" stroke-width="0.9"/>
<line x1="402.5" y1="474.1" x2="402.5" y2="529.4" stroke="#f0a0a0" stroke-width="0.9"/>
<line x1="407.5" y1="474.1" x2="407.5" y2="529.4" stroke="#f0a0a0" stroke-width="0.9"/>
<line x1="412.2" y1="474.1" x2="412.2" y2="529.4" stroke="#f0a0a0" stroke-width="0.9"/>
<line x1="413.5" y1="474.1" x2="413.5" y2="529.4" stroke="#f0a0a0" stroke-width="0.9"/>
<line x1="419.3" y1="474.1" x2="419.3" y2="529.4" stroke="#f0a0a0" stroke-width="0.9"/>
<line x1="424.9" y1="474.1" x2="424.9" y2="529.4" stroke="#f0a0a0" stroke-width="0.9"/>
<line x1="810.4" y1="474.1" x2="810.4" y2="529.4" stroke="#f0a0a0" stroke-width="0.9"/>
<line x1="318.8" y1="474.09999999999997" x2="318.8" y2="529.4" stroke="#555" stroke-width="1"/>
<line x1="318.8" y1="529.4" x2="916.31" y2="529.4" stroke="#555" stroke-width="1"/>
<line x1="318.8" y1="529.4" x2="318.8" y2="531.4" stroke="#555" stroke-width="0.9"/>
<line x1="332.1" y1="529.4" x2="332.1" y2="531.4" stroke="#555" stroke-width="0.9"/>
<line x1="345.4" y1="529.4" x2="345.4" y2="531.4" stroke="#555" stroke-width="0.9"/>
<line x1="358.6" y1="529.4" x2="358.6" y2="531.4" stroke="#555" stroke-width="0.9"/>
<line x1="371.9" y1="529.4" x2="371.9" y2="531.4" stroke="#555" stroke-width="0.9"/>
<line x1="385.2" y1="529.4" x2="385.2" y2="531.4" stroke="#555" stroke-width="0.9"/>
<line x1="398.5" y1="529.4" x2="398.5" y2="531.4" stroke="#555" stroke-width="0.9"/>
<line x1="411.7" y1="529.4" x2="411.7" y2="531.4" stroke="#555" stroke-width="0.9"/>
<line x1="425.0" y1="529.4" x2="425.0" y2="531.4" stroke="#555" stroke-width="0.9"/>
<line x1="438.3" y1="529.4" x2="438.3" y2="531.4" stroke="#555" stroke-width="0.9"/>
<line x1="451.6" y1="529.4" x2="451.6" y2="531.4" stroke="#555" stroke-width="0.9"/>
<line x1="464.9" y1="529.4" x2="464.9" y2="531.4" stroke="#555" stroke-width="0.9"/>
<line x1="478.1" y1="529.4" x2="478.1" y2="531.4" stroke="#555" stroke-width="0.9"/>
<line x1="491.4" y1="529.4" x2="491.4" y2="531.4" stroke="#555" stroke-width="0.9"/>
<line x1="504.7" y1="529.4" x2="504.7" y2="531.4" stroke="#555" stroke-width="0.9"/>
<line x1="518.0" y1="529.4" x2="518.0" y2="531.4" stroke="#555" stroke-width="0.9"/>
<line x1="531.2" y1="529.4" x2="531.2" y2="531.4" stroke="#555" stroke-width="0.9"/>
<line x1="544.5" y1="529.4" x2="544.5" y2="531.4" stroke="#555" stroke-width="0.9"/>
<line x1="557.8" y1="529.4" x2="557.8" y2="531.4" stroke="#555" stroke-width="0.9"/>
<line x1="571.1" y1="529.4" x2="571.1" y2="531.4" stroke="#555" stroke-width="0.9"/>
<line x1="584.4" y1="529.4" x2="584.4" y2="531.4" stroke="#555" stroke-width="0.9"/>
<line x1="597.6" y1="529.4" x2="597.6" y2="531.4" stroke="#555" stroke-width="0.9"/>
<line x1="610.9" y1="529.4" x2="610.9" y2="531.4" stroke="#555" stroke-width="0.9"/>
<line x1="624.2" y1="529.4" x2="624.2" y2="531.4" stroke="#555" stroke-width="0.9"/>
<line x1="637.5" y1="529.4" x2="637.5" y2="531.4" stroke="#555" stroke-width="0.9"/>
<line x1="650.8" y1="529.4" x2="650.8" y2="531.4" stroke="#555" stroke-width="0.9"/>
<line x1="664.0" y1="529.4" x2="664.0" y2="531.4" stroke="#555" stroke-width="0.9"/>
<line x1="677.3" y1="529.4" x2="677.3" y2="531.4" stroke="#555" stroke-width="0.9"/>
<line x1="690.6" y1="529.4" x2="690.6" y2="531.4" stroke="#555" stroke-width="0.9"/>
<line x1="703.9" y1="529.4" x2="703.9" y2="531.4" stroke="#555" stroke-width="0.9"/>
<line x1="717.1" y1="529.4" x2="717.1" y2="531.4" stroke="#555" stroke-width="0.9"/>
<line x1="730.4" y1="529.4" x2="730.4" y2="531.4" stroke="#555" stroke-width="0.9"/>
<line x1="743.7" y1="529.4" x2="743.7" y2="531.4" stroke="#555" stroke-width="0.9"/>
<line x1="757.0" y1="529.4" x2="757.0" y2="531.4" stroke="#555" stroke-width="0.9"/>
<line x1="770.3" y1="529.4" x2="770.3" y2="531.4" stroke="#555" stroke-width="0.9"/>
<line x1="783.5" y1="529.4" x2="783.5" y2="531.4" stroke="#555" stroke-width="0.9"/>
<line x1="796.8" y1="529.4" x2="796.8" y2="531.4" stroke="#555" stroke-width="0.9"/>
<line x1="810.1" y1="529.4" x2="810.1" y2="531.4" stroke="#555" stroke-width="0.9"/>
<line x1="823.4" y1="529.4" x2="823.4" y2="531.4" stroke="#555" stroke-width="0.9"/>
<line x1="836.6" y1="529.4" x2="836.6" y2="531.4" stroke="#555" stroke-width="0.9"/>
<line x1="849.9" y1="529.4" x2="849.9" y2="531.4" stroke="#555" stroke-width="0.9"/>
<line x1="863.2" y1="529.4" x2="863.2" y2="531.4" stroke="#555" stroke-width="0.9"/>
<line x1="876.5" y1="529.4" x2="876.5" y2="531.4" stroke="#555" stroke-width="0.9"/>
<line x1="889.8" y1="529.4" x2="889.8" y2="531.4" stroke="#555" stroke-width="0.9"/>
<line x1="903.0" y1="529.4" x2="903.0" y2="531.4" stroke="#555" stroke-width="0.9"/>
<line x1="916.3" y1="529.4" x2="916.3" y2="531.4" stroke="#555" stroke-width="0.9"/>
<line x1="316.3" y1="529.4" x2="318.8" y2="529.4" stroke="#555" stroke-width="0.9"/>
<line x1="316.3" y1="522.5" x2="318.8" y2="522.5" stroke="#555" stroke-width="0.9"/>
<line x1="316.3" y1="515.6" x2="318.8" y2="515.6" stroke="#555" stroke-width="0.9"/>
<line x1="316.3" y1="508.7" x2="318.8" y2="508.7" stroke="#555" stroke-width="0.9"/>
<line x1="316.3" y1="501.8" x2="318.8" y2="501.8" stroke="#555" stroke-width="0.9"/>
<line x1="316.3" y1="494.8" x2="318.8" y2="494.8" stroke="#555" stroke-width="0.9"/>
<line x1="316.3" y1="487.9" x2="318.8" y2="487.9" stroke="#555" stroke-width="0.9"/>
<line x1="316.3" y1="481.0" x2="318.8" y2="481.0" stroke="#555" stroke-width="0.9"/>
<line x1="316.3" y1="474.1" x2="318.8" y2="474.1" stroke="#555" stroke-width="0.9"/>
<text x="312.3" y="532.4" font-size="8" text-anchor="end" fill="#333" font-family="Liberation Sans">0</text>
<text x="312.3" y="518.6" font-size="8" text-anchor="end" fill="#333" font-family="Liberation Sans">10</text>
<text x="312.3" y="504.8" font-size="8" text-anchor="end" fill="#333" font-family="Liberation Sans">20</text>
<text x="312.3" y="490.9" font-size="8" text-anchor="end" fill="#333" font-family="Liberation Sans">30</text>
<text x="312.3" y="477.1" font-size="8" text-anchor="end" fill="#333" font-family="Liberation Sans">40</text>
<text x="318.8" y="541.5" font-size="8" text-anchor="middle" fill="#333" font-family="Liberation Sans">260</text>
<text x="345.4" y="541.5" font-size="8" text-anchor="middle" fill="#333" font-family="Liberation Sans">264</text>
<text x="371.9" y="541.5" font-size="8" text-anchor="middle" fill="#333" font-family="Liberation Sans">268</text>
<text x="398.5" y="541.5" font-size="8" text-anchor="middle" fill="#333" font-family="Liberation Sans">272</text>
<text x="425.0" y="541.5" font-size="8" text-anchor="middle" fill="#333" font-family="Liberation Sans">276</text>
<text x="451.6" y="541.5" font-size="8" text-anchor="middle" fill="#333" font-family="Liberation Sans">280</text>
<text x="478.1" y="541.5" font-size="8" text-anchor="middle" fill="#333" font-family="Liberation Sans">284</text>
<text x="504.7" y="541.5" font-size="8" text-anchor="middle" fill="#333" font-family="Liberation Sans">288</text>
<text x="531.2" y="541.5" font-size="8" text-anchor="middle" fill="#333" font-family="Liberation Sans">292</text>
<text x="557.8" y="541.5" font-size="8" text-anchor="middle" fill="#333" font-family="Liberation Sans">296</text>
<text x="584.4" y="541.5" font-size="8" text-anchor="middle" fill="#333" font-family="Liberation Sans">300</text>
<text x="610.9" y="541.5" font-size="8" text-anchor="middle" fill="#333" font-family="Liberation Sans">304</text>
<text x="637.5" y="541.5" font-size="8" text-anchor="middle" fill="#333" font-family="Liberation Sans">308</text>
<text x="664.0" y="541.5" font-size="8" text-anchor="middle" fill="#333" font-family="Liberation Sans">312</text>
<text x="690.6" y="541.5" font-size="8" text-anchor="middle" fill="#333" font-family="Liberation Sans">316</text>
<text x="717.1" y="541.5" font-size="8" text-anchor="middle" fill="#333" font-family="Liberation Sans">320</text>
<text x="743.7" y="541.5" font-size="8" text-anchor="middle" fill="#333" font-family="Liberation Sans">324</text>
<text x="770.3" y="541.5" font-size="8" text-anchor="middle" fill="#333" font-family="Liberation Sans">328</text>
<text x="796.8" y="541.5" font-size="8" text-anchor="middle" fill="#333" font-family="Liberation Sans">332</text>
<text x="823.4" y="541.5" font-size="8" text-anchor="middle" fill="#333" font-family="Liberation Sans">336</text>
<text x="849.9" y="541.5" font-size="8" text-anchor="middle" fill="#333" font-family="Liberation Sans">340</text>
<text x="876.5" y="541.5" font-size="8" text-anchor="middle" fill="#333" font-family="Liberation Sans">344</text>
<text x="903.0" y="541.5" font-size="8" text-anchor="middle" fill="#333" font-family="Liberation Sans">348</text>
<text x="617.5" y="556.3" font-size="9.6" text-anchor="middle" fill="#333" font-family="Liberation Sans">时间(day)</text>
<text transform="translate(292,501.5) rotate(-90)" font-size="8" text-anchor="middle" fill="#333" font-family="Liberation Sans">压力(MPa)</text>
<path d="M318.8 512.8 H402.5 V503 L412 501 C416 499 419 496 422.6 497 C426 498 428 501 432.7 502.7 C438 504.5 443 505.3 448.4 505.5 L548 508.5 L609 509.8 L810.1 510 L916.3 511" stroke="#e03a3a" stroke-width="1.2" fill="none"/>
<path d="M379 529 H403" stroke="#111" stroke-width="2.6"/>
<rect x="401" y="477" width="5.5" height="35" fill="#3a1818"/>
<rect x="406.5" y="481" width="1.8" height="12" fill="#5a3030"/>
<path d="M401.5 493 L412 497 L412 502 L401.5 505Z" fill="#3a2020"/>
<path d="M412 501 C416 499 419 496 422.6 497 C426 498 428 501 432.7 502.7 C438 504.5 443 505.3 448.4 505.5 L469.7 507.2" stroke="#111" stroke-width="2.8" fill="none"/>
<line x1="469.7" y1="507.2" x2="481" y2="507.4" stroke="#111" stroke-width="2.6"/>
<line x1="483" y1="507.4" x2="496" y2="507.6" stroke="#111" stroke-width="2.6"/>
<line x1="503" y1="507.8" x2="519" y2="508.0" stroke="#111" stroke-width="2.6"/>
<line x1="521" y1="508.1" x2="548" y2="508.5" stroke="#111" stroke-width="2.6"/>
<path d="M548 508.5 L609.4 509.7" stroke="#111" stroke-width="2.6"/>
<rect x="924.5" y="495.5" width="89" height="40" fill="#fff" stroke="#e8e8e8"/>
<rect x="938.8" y="506.6" width="2.4" height="2.4" fill="#111"/>
<line x1="931" y1="523" x2="949" y2="523" stroke="#e03a3a" stroke-width="1.3"/>
<text transform="translate(952.5,512.4) scale(1.125,1)" font-size="12" fill="#333" font-family="Liberation Sans">实测压力</text>
<text transform="translate(952.5,527.6) scale(1.125,1)" font-size="12" fill="#333" font-family="Liberation Sans">计算压力</text>
</svg></div></body></html>
